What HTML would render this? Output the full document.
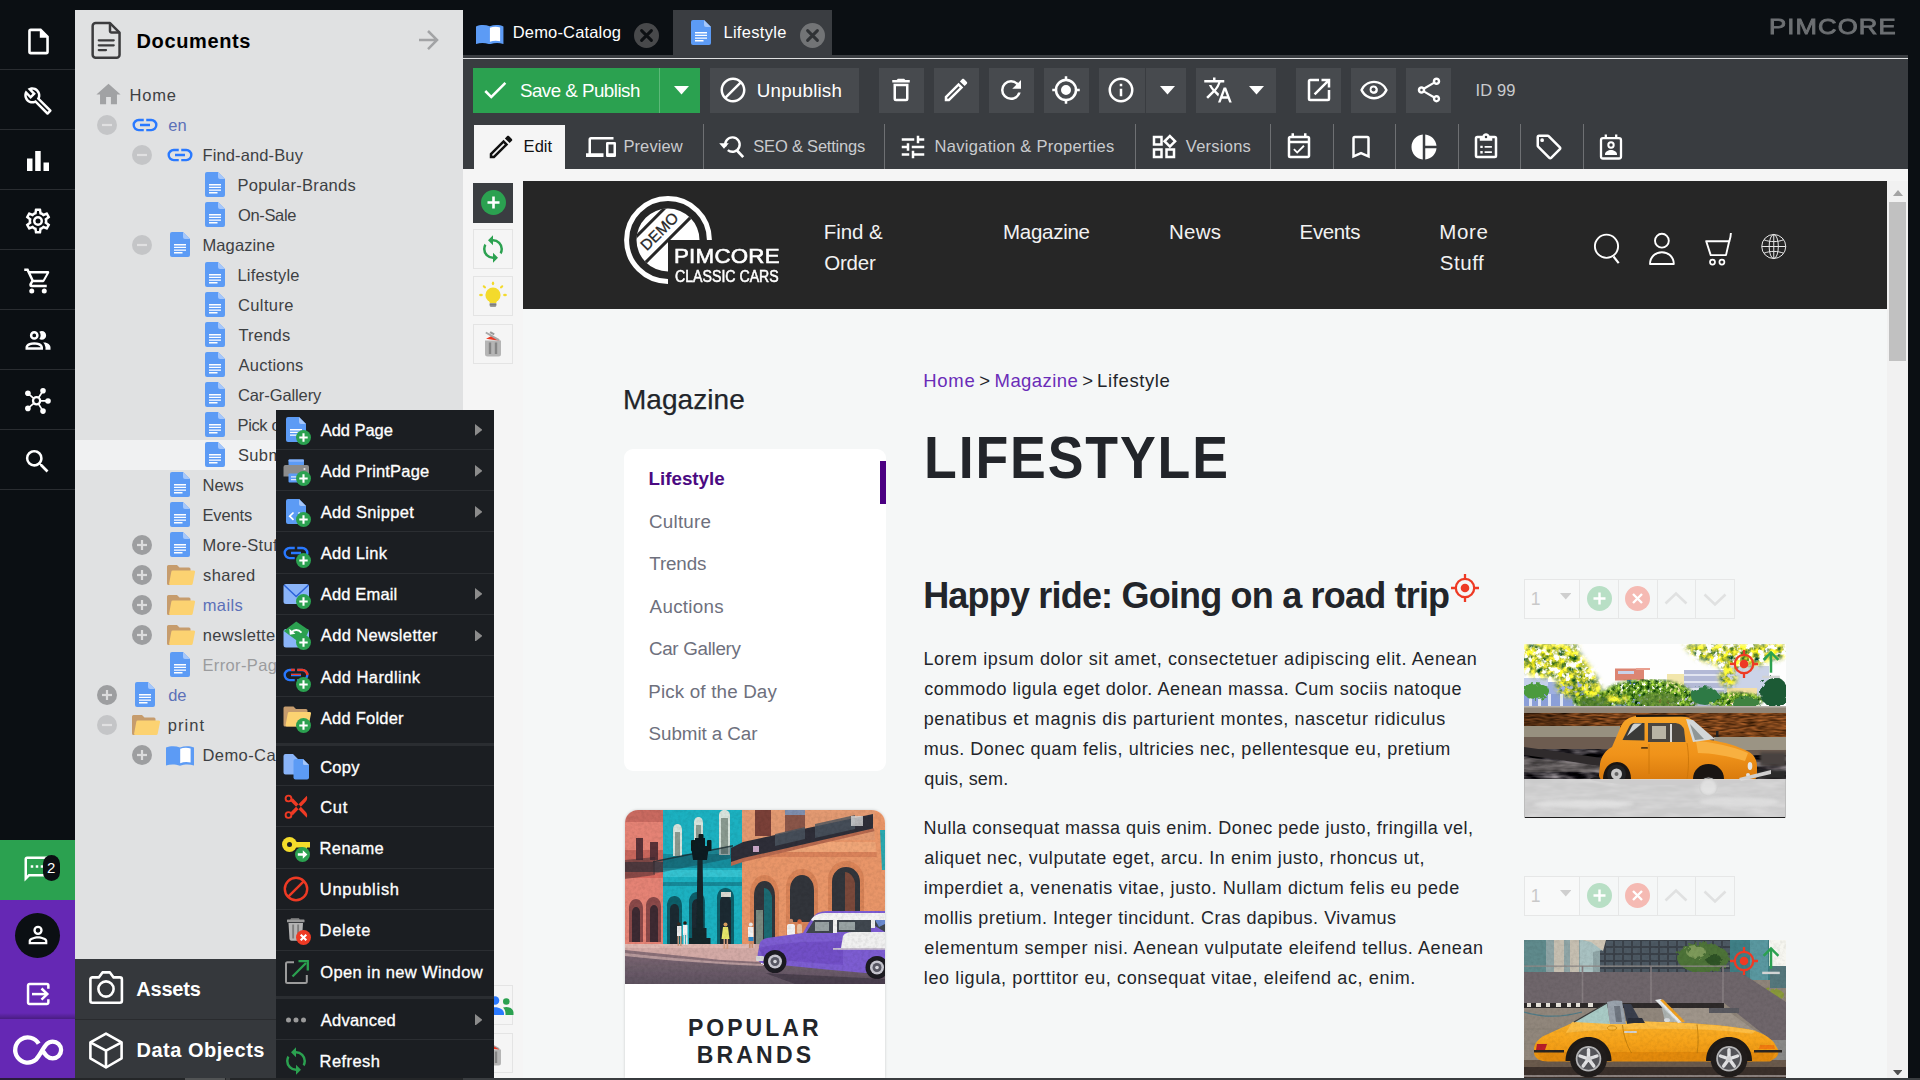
<!DOCTYPE html>
<html lang="en"><head><meta charset="utf-8"><title>Pimcore - Lifestyle</title>
<style>
html,body{margin:0;padding:0}
body{width:1920px;height:1080px;overflow:hidden;background:#0b0f13;position:relative;font-family:"Liberation Sans",sans-serif}
.a{position:absolute;display:block}
.t{white-space:nowrap}
</style></head>
<body>
<!-- chrome -->
<div class="a" style="left:75px;top:10px;width:388px;height:1070px;background:#e0e1e2;"></div>
<div class="a" style="left:0px;top:69px;width:75px;height:1px;background:#2a2d31;"></div>
<div class="a" style="left:0px;top:129px;width:75px;height:1px;background:#2a2d31;"></div>
<div class="a" style="left:0px;top:189px;width:75px;height:1px;background:#2a2d31;"></div>
<div class="a" style="left:0px;top:249px;width:75px;height:1px;background:#2a2d31;"></div>
<div class="a" style="left:0px;top:309px;width:75px;height:1px;background:#2a2d31;"></div>
<div class="a" style="left:0px;top:369px;width:75px;height:1px;background:#2a2d31;"></div>
<div class="a" style="left:0px;top:429px;width:75px;height:1px;background:#2a2d31;"></div>
<div class="a" style="left:0px;top:489px;width:75px;height:1px;background:#2a2d31;"></div>
<svg class="a" style="left:22.5px;top:25.5px" width="31" height="31" viewBox="0 0 24 24"><path fill="#fff" d="M14 2H6a2 2 0 0 0-2 2v16a2 2 0 0 0 2 2h12a2 2 0 0 0 2-2V8zm4 18H6V4h7v5h5z" /></svg>
<svg class="a" style="left:22.5px;top:86.0px" width="30" height="30" viewBox="0 0 24 24"><path fill="#fff" d="m22.61 19-9.08-9.09c.93-2.34.47-5.1-1.44-7C9.79.61 6.21.4 3.66 2.26L7.5 6.11 6.08 7.5 2.25 3.69C.39 6.23.6 9.82 2.9 12.11c1.86 1.86 4.57 2.35 6.89 1.48l9.11 9.11c.39.39 1.02.39 1.41 0l2.3-2.3c.39-.4.39-1.01 0-1.4m-3 1.59-9.46-9.46c-.61.45-1.29.72-2 .82-1.36.2-2.79-.21-3.83-1.25C3.37 9.76 2.93 8.5 3 7.26l3.09 3.09 4.24-4.24L7.24 3c1.26-.05 2.49.39 3.44 1.33a4.47 4.47 0 0 1 1.24 3.96 4.35 4.35 0 0 1-.88 1.96l9.46 9.45z" /></svg>
<svg class="a" style="left:27px;top:151px;" width="22" height="20" viewBox="0 0 22 20"><path d="M0 7.500h5.500V20H0zM8.200 0h5.500v20H8.200zM16.500 11.500H22V20h-5.500z" fill="#fff"/></svg>
<svg class="a" style="left:22.5px;top:206.0px" width="30" height="30" viewBox="0 0 24 24"><path fill="#fff" d="M12 8a4 4 0 0 1 4 4 4 4 0 0 1-4 4 4 4 0 0 1-4-4 4 4 0 0 1 4-4m0 2a2 2 0 0 0-2 2 2 2 0 0 0 2 2 2 2 0 0 0 2-2 2 2 0 0 0-2-2m-2 12c-.25 0-.46-.18-.5-.42l-.37-2.65c-.63-.25-1.17-.59-1.69-.99l-2.49 1.01c-.22.08-.49 0-.61-.22l-2-3.46a.493.493 0 0 1 .12-.64l2.11-1.66L4.5 12l.07-1-2.11-1.63a.493.493 0 0 1-.12-.64l2-3.46c.12-.22.39-.31.61-.22l2.49 1c.52-.39 1.06-.73 1.69-.98l.37-2.65c.04-.24.25-.42.5-.42h4c.25 0 .46.18.5.42l.37 2.65c.63.25 1.17.59 1.69.98l2.49-1c.22-.09.49 0 .61.22l2 3.46c.13.22.07.49-.12.64L19.43 11l.07 1-.07 1 2.11 1.63c.19.15.25.42.12.64l-2 3.46c-.12.22-.39.31-.61.22l-2.49-1c-.52.39-1.06.73-1.69.98l-.37 2.65c-.04.24-.25.42-.5.42zm1.25-18-.37 2.61c-1.2.25-2.26.89-3.03 1.78L5.44 7.35l-.75 1.3L6.8 10.2a5.55 5.55 0 0 0 0 3.6l-2.12 1.56.75 1.3 2.43-1.04c.77.88 1.82 1.52 3.01 1.76l.37 2.62h1.52l.37-2.61c1.19-.25 2.24-.89 3.01-1.77l2.43 1.04.75-1.3-2.12-1.55c.4-1.17.4-2.44 0-3.61l2.11-1.55-.75-1.3-2.41 1.04a5.42 5.42 0 0 0-3.03-1.77L12.75 4z" /></svg>
<svg class="a" style="left:22.5px;top:266.0px" width="30" height="30" viewBox="0 0 24 24"><path fill="#fff" d="M17 18a2 2 0 0 1 2 2 2 2 0 0 1-2 2 2 2 0 0 1-2-2c0-1.11.89-2 2-2M1 2h3.27l.94 2H20a1 1 0 0 1 1 1c0 .17-.05.34-.12.5l-3.58 6.47c-.34.61-1 1.03-1.75 1.03H8.1l-.9 1.63-.03.12a.25.25 0 0 0 .25.25H19v2H7a2 2 0 0 1-2-2c0-.35.09-.68.24-.96l1.36-2.45L3 4H1zm6 16a2 2 0 0 1 2 2 2 2 0 0 1-2 2 2 2 0 0 1-2-2c0-1.11.89-2 2-2m9-7 2.78-5H6.14l2.36 5z" /></svg>
<svg class="a" style="left:22.5px;top:326.0px" width="30" height="30" viewBox="0 0 24 24"><path fill="#fff" d="M13.07 10.41a5 5 0 0 0 0-5.82A3.4 3.4 0 0 1 15 4a3.5 3.5 0 0 1 0 7 3.4 3.4 0 0 1-1.93-.59M5.5 7.5A3.5 3.5 0 1 1 9 11a3.5 3.5 0 0 1-3.5-3.5m2 0A1.5 1.5 0 1 0 9 6a1.5 1.5 0 0 0-1.5 1.5M16 17v2H2v-2s0-4 7-4 7 4 7 4m-2 0c-.14-.78-1.33-2-5-2s-4.93 1.31-5 2m11.95-4A5.32 5.32 0 0 1 18 17v2h4v-2s0-3.63-6.06-4Z" /></svg>
<svg class="a" style="left:22px;top:385px;" width="32" height="32" viewBox="0 0 32 32"><g transform="translate(-22 -385)"><g stroke="#fff" stroke-width="1.700"><path d="M36.600 400.800L27.900 393.300M36.600 400.800L43 390.800M36.600 400.800H48M36.600 400.800L43 411.100M36.600 400.800L27.900 408.400"/></g><circle cx="36.600" cy="400.800" r="3.600" fill="#0b0f13" stroke="#fff" stroke-width="2.300"/><g fill="#fff"><circle cx="27.900" cy="393.300" r="2.800"/><circle cx="43" cy="390.800" r="2.800"/><circle cx="48" cy="401" r="2.800"/><circle cx="43" cy="411.100" r="2.800"/><circle cx="27.900" cy="408.400" r="2.800"/></g></g></svg>
<svg class="a" style="left:22.0px;top:445.5px" width="31" height="31" viewBox="0 0 24 24"><path fill="#fff" d="M9.5 3A6.5 6.5 0 0 1 16 9.5c0 1.61-.59 3.09-1.56 4.23l.27.27h.79l5 5-1.5 1.5-5-5v-.79l-.27-.27A6.52 6.52 0 0 1 9.5 16 6.5 6.5 0 0 1 3 9.5 6.5 6.5 0 0 1 9.5 3m0 2C7 5 5 7 5 9.5S7 14 9.5 14 14 12 14 9.5 12 5 9.5 5" /></svg>
<div class="a" style="left:0px;top:840px;width:75px;height:60px;background:#2ba150;"></div>
<svg class="a" style="left:22.0px;top:853.5px" width="30" height="30" viewBox="0 0 24 24"><path fill="#fff" d="M20 2H4c-1.1 0-2 .9-2 2v18l4-4h14c1.1 0 2-.9 2-2V4c0-1.1-.9-2-2-2m0 14H5.2L4 17.2V4h16zm-3-5h-2V9h2m-4 2h-2V9h2m-4 2H7V9h2" /></svg>
<div class="a" style="left:43px;top:855px;width:17px;height:26px;background:#0b0f13;border-radius:8.500px"></div>
<div class="a t" style="left:47.08px;top:857.00px;font-size:15px;line-height:21px;color:#fff;">2</div>
<div class="a" style="left:0px;top:900px;width:75px;height:180px;background:#6528b4;"></div>
<div class="a" style="left:0px;top:1013px;width:75px;height:6px;background:linear-gradient(to bottom,rgba(0,0,0,0),rgba(0,0,0,.28));"></div>
<div class="a" style="left:15px;top:913px;width:45px;height:45px;background:#0b0f13;border-radius:50%"></div>
<svg class="a" style="left:23.5px;top:921.0px" width="28" height="28" viewBox="0 0 24 24"><path fill="#fff" d="M12 4a4 4 0 0 1 4 4 4 4 0 0 1-4 4 4 4 0 0 1-4-4 4 4 0 0 1 4-4m0 2a2 2 0 0 0-2 2 2 2 0 0 0 2 2 2 2 0 0 0 2-2 2 2 0 0 0-2-2m0 7c2.67 0 8 1.33 8 4v3H4v-3c0-2.67 5.33-4 8-4m0 1.9c-2.97 0-6.1 1.46-6.1 2.1v1.1h12.2V17c0-.64-3.13-2.1-6.1-2.1" /></svg>
<svg class="a" style="left:24px;top:980px;" width="30" height="28" viewBox="0 0 30 28"><g fill="none" stroke="#fff" stroke-width="2.500" stroke-linejoin="round"><path d="M24.350 8.800V5.500a1.500 1.500 0 0 0-1.500-1.500H5.550a1.500 1.500 0 0 0-1.500 1.500V22.600a1.500 1.500 0 0 0 1.500 1.500H22.850a1.500 1.500 0 0 0 1.500-1.500V19.300"/><path d="M8 14.100h15"/><path d="M17.500 8.500l5.800 5.600-5.800 5.600" stroke-linejoin="miter"/></g></svg>
<svg class="a" style="left:8px;top:1030px;" width="60" height="40" viewBox="0 0 60 40"><path transform="translate(-8 -1030)" d="M38.700 1043.700A12.600 12.600 0 1 0 35.900 1059.650C40 1055.500 42.500 1048.500 46.760 1044.060A8.400 8.400 0 1 1 46.760 1055.940C45.200 1054.400 44.200 1053 43.200 1051.500" fill="none" stroke="#fff" stroke-width="4.300" stroke-linecap="butt"/></svg>
<svg class="a" style="left:90px;top:20px;" width="32" height="40" viewBox="0 0 32 40"><g fill="none" stroke="#3c3c3e" stroke-width="2.500" stroke-linejoin="round"><path d="M5.650 3.050H20L29.550 12.600V34.650a3 3 0 0 1-3 3H5.650a3 3 0 0 1-3-3V6.050a3 3 0 0 1 3-3z"/><path d="M20 3.050V11a1.500 1.500 0 0 0 1.500 1.500H29.500"/><path d="M8.800 20.300H23.700M8.800 25.300H23.700M8.800 30.100H16" stroke-linecap="round" stroke-width="2.300"/></g></svg>
<div class="a t" style="left:136.50px;top:27.00px;font-size:20px;line-height:28px;color:#000;font-weight:700;letter-spacing:0.628px;">Documents</div>
<svg class="a" style="left:414.0px;top:25.0px" width="30" height="30" viewBox="0 0 24 24"><path fill="#a2a3a5" d="M4 11v2h12l-5.5 5.5 1.42 1.42L19.84 12l-7.92-7.92L10.5 5.5 16 11z" /></svg>
<div class="a" style="left:75px;top:440px;width:388px;height:30px;background:#f0f1f2;"></div>
<svg class="a" style="left:93.5px;top:80.0px" width="29" height="29" viewBox="0 0 24 24"><path fill="#a1a2a4" d="M10 20v-6h4v6h5v-8h3L12 3 2 12h3v8z" /></svg>
<div class="a t" style="left:129.62px;top:84.00px;font-size:16.5px;line-height:23px;color:#3d4043;letter-spacing:0.755px;">Home</div>
<svg class="a" style="left:96.9px;top:115px;" width="20" height="20" viewBox="0 0 20 20"><circle cx="10" cy="10" r="10" fill="#c4c5c7"/><rect x="5" y="8.900" width="10" height="2.200" fill="#e0e0e1"/></svg>
<svg class="a" style="left:130.0px;top:110.0px" width="30" height="30" viewBox="0 0 24 24"><path fill="#2979ff" d="M3.9 12c0-1.71 1.39-3.1 3.1-3.1h4V7H7a5 5 0 0 0-5 5 5 5 0 0 0 5 5h4v-1.9H7c-1.71 0-3.1-1.39-3.1-3.1M8 13h8v-2H8zm9-6h-4v1.9h4c1.71 0 3.1 1.39 3.1 3.1s-1.39 3.1-3.1 3.1h-4V17h4a5 5 0 0 0 5-5 5 5 0 0 0-5-5" /></svg>
<div class="a t" style="left:168.18px;top:114.00px;font-size:16.5px;line-height:23px;color:#5c70b8;letter-spacing:0.061px;">en</div>
<svg class="a" style="left:131.9px;top:145px;" width="20" height="20" viewBox="0 0 20 20"><circle cx="10" cy="10" r="10" fill="#c4c5c7"/><rect x="5" y="8.900" width="10" height="2.200" fill="#e0e0e1"/></svg>
<svg class="a" style="left:165.0px;top:140.0px" width="30" height="30" viewBox="0 0 24 24"><path fill="#2979ff" d="M3.9 12c0-1.71 1.39-3.1 3.1-3.1h4V7H7a5 5 0 0 0-5 5 5 5 0 0 0 5 5h4v-1.9H7c-1.71 0-3.1-1.39-3.1-3.1M8 13h8v-2H8zm9-6h-4v1.9h4c1.71 0 3.1 1.39 3.1 3.1s-1.39 3.1-3.1 3.1h-4V17h4a5 5 0 0 0 5-5 5 5 0 0 0-5-5" /></svg>
<div class="a t" style="left:202.48px;top:144.00px;font-size:16.5px;line-height:23px;color:#3d4043;letter-spacing:0.125px;">Find-and-Buy</div>
<svg class="a" style="left:205.0px;top:171.9px;" width="20.0" height="25.0" viewBox="0 0 20 25"><path d="M2 0h11l7 7v16a2 2 0 0 1-2 2H2a2 2 0 0 1-2-2V2a2 2 0 0 1 2-2z" fill="#5c9bf5"/><path d="M13 0l7 7h-5a2 2 0 0 1-2-2z" fill="#a5c7fb"/><path d="M4 12h12v1.4H4zM4 14.7h12v1.4H4zM4 17.4h12v1.4H4zM4 20.1h8.5v1.4H4z" fill="#fff"/></svg>
<div class="a t" style="left:237.48px;top:174.00px;font-size:16.5px;line-height:23px;color:#3d4043;letter-spacing:0.280px;">Popular-Brands</div>
<svg class="a" style="left:205.0px;top:201.9px;" width="20.0" height="25.0" viewBox="0 0 20 25"><path d="M2 0h11l7 7v16a2 2 0 0 1-2 2H2a2 2 0 0 1-2-2V2a2 2 0 0 1 2-2z" fill="#5c9bf5"/><path d="M13 0l7 7h-5a2 2 0 0 1-2-2z" fill="#a5c7fb"/><path d="M4 12h12v1.4H4zM4 14.7h12v1.4H4zM4 17.4h12v1.4H4zM4 20.1h8.5v1.4H4z" fill="#fff"/></svg>
<div class="a t" style="left:237.95px;top:204.00px;font-size:16.5px;line-height:23px;color:#3d4043;letter-spacing:-0.334px;">On-Sale</div>
<svg class="a" style="left:131.9px;top:235px;" width="20" height="20" viewBox="0 0 20 20"><circle cx="10" cy="10" r="10" fill="#c4c5c7"/><rect x="5" y="8.900" width="10" height="2.200" fill="#e0e0e1"/></svg>
<svg class="a" style="left:170.0px;top:231.9px;" width="20.0" height="25.0" viewBox="0 0 20 25"><path d="M2 0h11l7 7v16a2 2 0 0 1-2 2H2a2 2 0 0 1-2-2V2a2 2 0 0 1 2-2z" fill="#5c9bf5"/><path d="M13 0l7 7h-5a2 2 0 0 1-2-2z" fill="#a5c7fb"/><path d="M4 12h12v1.4H4zM4 14.7h12v1.4H4zM4 17.4h12v1.4H4zM4 20.1h8.5v1.4H4z" fill="#fff"/></svg>
<div class="a t" style="left:202.48px;top:234.00px;font-size:16.5px;line-height:23px;color:#3d4043;letter-spacing:0.114px;">Magazine</div>
<svg class="a" style="left:205.0px;top:261.9px;" width="20.0" height="25.0" viewBox="0 0 20 25"><path d="M2 0h11l7 7v16a2 2 0 0 1-2 2H2a2 2 0 0 1-2-2V2a2 2 0 0 1 2-2z" fill="#5c9bf5"/><path d="M13 0l7 7h-5a2 2 0 0 1-2-2z" fill="#a5c7fb"/><path d="M4 12h12v1.4H4zM4 14.7h12v1.4H4zM4 17.4h12v1.4H4zM4 20.1h8.5v1.4H4z" fill="#fff"/></svg>
<div class="a t" style="left:237.48px;top:264.00px;font-size:16.5px;line-height:23px;color:#3d4043;letter-spacing:0.183px;">Lifestyle</div>
<svg class="a" style="left:205.0px;top:291.9px;" width="20.0" height="25.0" viewBox="0 0 20 25"><path d="M2 0h11l7 7v16a2 2 0 0 1-2 2H2a2 2 0 0 1-2-2V2a2 2 0 0 1 2-2z" fill="#5c9bf5"/><path d="M13 0l7 7h-5a2 2 0 0 1-2-2z" fill="#a5c7fb"/><path d="M4 12h12v1.4H4zM4 14.7h12v1.4H4zM4 17.4h12v1.4H4zM4 20.1h8.5v1.4H4z" fill="#fff"/></svg>
<div class="a t" style="left:237.97px;top:294.00px;font-size:16.5px;line-height:23px;color:#3d4043;letter-spacing:0.386px;">Culture</div>
<svg class="a" style="left:205.0px;top:321.9px;" width="20.0" height="25.0" viewBox="0 0 20 25"><path d="M2 0h11l7 7v16a2 2 0 0 1-2 2H2a2 2 0 0 1-2-2V2a2 2 0 0 1 2-2z" fill="#5c9bf5"/><path d="M13 0l7 7h-5a2 2 0 0 1-2-2z" fill="#a5c7fb"/><path d="M4 12h12v1.4H4zM4 14.7h12v1.4H4zM4 17.4h12v1.4H4zM4 20.1h8.5v1.4H4z" fill="#fff"/></svg>
<div class="a t" style="left:238.41px;top:324.00px;font-size:16.5px;line-height:23px;color:#3d4043;letter-spacing:0.225px;">Trends</div>
<svg class="a" style="left:205.0px;top:351.9px;" width="20.0" height="25.0" viewBox="0 0 20 25"><path d="M2 0h11l7 7v16a2 2 0 0 1-2 2H2a2 2 0 0 1-2-2V2a2 2 0 0 1 2-2z" fill="#5c9bf5"/><path d="M13 0l7 7h-5a2 2 0 0 1-2-2z" fill="#a5c7fb"/><path d="M4 12h12v1.4H4zM4 14.7h12v1.4H4zM4 17.4h12v1.4H4zM4 20.1h8.5v1.4H4z" fill="#fff"/></svg>
<div class="a t" style="left:238.62px;top:354.00px;font-size:16.5px;line-height:23px;color:#3d4043;letter-spacing:0.196px;">Auctions</div>
<svg class="a" style="left:205.0px;top:381.9px;" width="20.0" height="25.0" viewBox="0 0 20 25"><path d="M2 0h11l7 7v16a2 2 0 0 1-2 2H2a2 2 0 0 1-2-2V2a2 2 0 0 1 2-2z" fill="#5c9bf5"/><path d="M13 0l7 7h-5a2 2 0 0 1-2-2z" fill="#a5c7fb"/><path d="M4 12h12v1.4H4zM4 14.7h12v1.4H4zM4 17.4h12v1.4H4zM4 20.1h8.5v1.4H4z" fill="#fff"/></svg>
<div class="a t" style="left:237.97px;top:384.00px;font-size:16.5px;line-height:23px;color:#3d4043;letter-spacing:-0.096px;">Car-Gallery</div>
<svg class="a" style="left:205.0px;top:411.9px;" width="20.0" height="25.0" viewBox="0 0 20 25"><path d="M2 0h11l7 7v16a2 2 0 0 1-2 2H2a2 2 0 0 1-2-2V2a2 2 0 0 1 2-2z" fill="#5c9bf5"/><path d="M13 0l7 7h-5a2 2 0 0 1-2-2z" fill="#a5c7fb"/><path d="M4 12h12v1.4H4zM4 14.7h12v1.4H4zM4 17.4h12v1.4H4zM4 20.1h8.5v1.4H4z" fill="#fff"/></svg>
<div class="a t" style="left:237.48px;top:414.00px;font-size:16.5px;line-height:23px;color:#3d4043;letter-spacing:-0.343px;">Pick of the Day</div>
<svg class="a" style="left:205.0px;top:441.9px;" width="20.0" height="25.0" viewBox="0 0 20 25"><path d="M2 0h11l7 7v16a2 2 0 0 1-2 2H2a2 2 0 0 1-2-2V2a2 2 0 0 1 2-2z" fill="#5c9bf5"/><path d="M13 0l7 7h-5a2 2 0 0 1-2-2z" fill="#a5c7fb"/><path d="M4 12h12v1.4H4zM4 14.7h12v1.4H4zM4 17.4h12v1.4H4zM4 20.1h8.5v1.4H4z" fill="#fff"/></svg>
<div class="a t" style="left:237.92px;top:444.00px;font-size:16.5px;line-height:23px;color:#3d4043;letter-spacing:0.386px;">Submit a Car</div>
<svg class="a" style="left:170.0px;top:471.9px;" width="20.0" height="25.0" viewBox="0 0 20 25"><path d="M2 0h11l7 7v16a2 2 0 0 1-2 2H2a2 2 0 0 1-2-2V2a2 2 0 0 1 2-2z" fill="#5c9bf5"/><path d="M13 0l7 7h-5a2 2 0 0 1-2-2z" fill="#a5c7fb"/><path d="M4 12h12v1.4H4zM4 14.7h12v1.4H4zM4 17.4h12v1.4H4zM4 20.1h8.5v1.4H4z" fill="#fff"/></svg>
<div class="a t" style="left:202.48px;top:474.00px;font-size:16.5px;line-height:23px;color:#3d4043;letter-spacing:0.007px;">News</div>
<svg class="a" style="left:170.0px;top:501.9px;" width="20.0" height="25.0" viewBox="0 0 20 25"><path d="M2 0h11l7 7v16a2 2 0 0 1-2 2H2a2 2 0 0 1-2-2V2a2 2 0 0 1 2-2z" fill="#5c9bf5"/><path d="M13 0l7 7h-5a2 2 0 0 1-2-2z" fill="#a5c7fb"/><path d="M4 12h12v1.4H4zM4 14.7h12v1.4H4zM4 17.4h12v1.4H4zM4 20.1h8.5v1.4H4z" fill="#fff"/></svg>
<div class="a t" style="left:202.48px;top:504.00px;font-size:16.5px;line-height:23px;color:#3d4043;letter-spacing:-0.130px;">Events</div>
<svg class="a" style="left:131.9px;top:535px;" width="20" height="20" viewBox="0 0 20 20"><circle cx="10" cy="10" r="10" fill="#9d9ea0"/><rect x="5" y="8.900" width="10" height="2.200" fill="#dcdcdd"/><rect x="8.900" y="5" width="2.200" height="10" fill="#dcdcdd"/></svg>
<svg class="a" style="left:170.0px;top:531.9px;" width="20.0" height="25.0" viewBox="0 0 20 25"><path d="M2 0h11l7 7v16a2 2 0 0 1-2 2H2a2 2 0 0 1-2-2V2a2 2 0 0 1 2-2z" fill="#5c9bf5"/><path d="M13 0l7 7h-5a2 2 0 0 1-2-2z" fill="#a5c7fb"/><path d="M4 12h12v1.4H4zM4 14.7h12v1.4H4zM4 17.4h12v1.4H4zM4 20.1h8.5v1.4H4z" fill="#fff"/></svg>
<div class="a t" style="left:202.48px;top:534.00px;font-size:16.5px;line-height:23px;color:#3d4043;letter-spacing:0.341px;">More-Stuff</div>
<svg class="a" style="left:131.9px;top:565px;" width="20" height="20" viewBox="0 0 20 20"><circle cx="10" cy="10" r="10" fill="#9d9ea0"/><rect x="5" y="8.900" width="10" height="2.200" fill="#dcdcdd"/><rect x="8.900" y="5" width="2.200" height="10" fill="#dcdcdd"/></svg>
<svg class="a" style="left:167.0px;top:565.0px;" width="28.0" height="20.0" viewBox="0 0 28 20"><path d="M1.5 0h8.5l2.5 2.6h9.5a1.5 1.5 0 0 1 1.5 1.5V18.5a1.5 1.5 0 0 1-1.500 1.5H1.500A1.500 1.500 0 0 1 0 18.500V1.500A1.500 1.500 0 0 1 1.500 0z" fill="#c69c6d"/><path d="M5.800 5.500h20.700a1.500 1.500 0 0 1 1.480 1.800l-2.300 11.400a1.600 1.600 0 0 1-1.560 1.300H3.400a1.300 1.300 0 0 1-1.280-1.560l2.200-11.700a1.500 1.500 0 0 1 1.480-1.240z" fill="#fcd271"/></svg>
<div class="a t" style="left:203.11px;top:564.00px;font-size:16.5px;line-height:23px;color:#3d4043;letter-spacing:0.305px;">shared</div>
<svg class="a" style="left:131.9px;top:595px;" width="20" height="20" viewBox="0 0 20 20"><circle cx="10" cy="10" r="10" fill="#9d9ea0"/><rect x="5" y="8.900" width="10" height="2.200" fill="#dcdcdd"/><rect x="8.900" y="5" width="2.200" height="10" fill="#dcdcdd"/></svg>
<svg class="a" style="left:167.0px;top:595.0px;" width="28.0" height="20.0" viewBox="0 0 28 20"><path d="M1.5 0h8.5l2.5 2.6h9.5a1.5 1.5 0 0 1 1.5 1.5V18.5a1.5 1.5 0 0 1-1.500 1.5H1.500A1.500 1.500 0 0 1 0 18.500V1.500A1.500 1.500 0 0 1 1.500 0z" fill="#c69c6d"/><path d="M5.800 5.500h20.700a1.500 1.500 0 0 1 1.480 1.800l-2.300 11.400a1.600 1.600 0 0 1-1.560 1.300H3.400a1.300 1.300 0 0 1-1.280-1.560l2.200-11.700a1.500 1.500 0 0 1 1.480-1.240z" fill="#fcd271"/></svg>
<div class="a t" style="left:202.72px;top:594.00px;font-size:16.5px;line-height:23px;color:#5c70b8;letter-spacing:0.384px;">mails</div>
<svg class="a" style="left:131.9px;top:625px;" width="20" height="20" viewBox="0 0 20 20"><circle cx="10" cy="10" r="10" fill="#9d9ea0"/><rect x="5" y="8.900" width="10" height="2.200" fill="#dcdcdd"/><rect x="8.900" y="5" width="2.200" height="10" fill="#dcdcdd"/></svg>
<svg class="a" style="left:167.0px;top:625.0px;" width="28.0" height="20.0" viewBox="0 0 28 20"><path d="M1.5 0h8.5l2.5 2.6h9.5a1.5 1.5 0 0 1 1.5 1.5V18.5a1.5 1.5 0 0 1-1.500 1.5H1.500A1.500 1.500 0 0 1 0 18.500V1.500A1.500 1.500 0 0 1 1.500 0z" fill="#c69c6d"/><path d="M5.800 5.500h20.700a1.500 1.500 0 0 1 1.480 1.800l-2.300 11.400a1.600 1.600 0 0 1-1.560 1.300H3.400a1.300 1.300 0 0 1-1.280-1.560l2.200-11.700a1.500 1.500 0 0 1 1.480-1.240z" fill="#fcd271"/></svg>
<div class="a t" style="left:202.72px;top:624.00px;font-size:16.5px;line-height:23px;color:#3d4043;letter-spacing:0.351px;">newsletters</div>
<svg class="a" style="left:170.0px;top:651.9px;" width="20.0" height="25.0" viewBox="0 0 20 25"><path d="M2 0h11l7 7v16a2 2 0 0 1-2 2H2a2 2 0 0 1-2-2V2a2 2 0 0 1 2-2z" fill="#5c9bf5"/><path d="M13 0l7 7h-5a2 2 0 0 1-2-2z" fill="#a5c7fb"/><path d="M4 12h12v1.4H4zM4 14.7h12v1.4H4zM4 17.4h12v1.4H4zM4 20.1h8.5v1.4H4z" fill="#fff"/></svg>
<div class="a t" style="left:202.48px;top:654.00px;font-size:16.5px;line-height:23px;color:#9b9c9e;letter-spacing:0.360px;">Error-Page</div>
<svg class="a" style="left:96.9px;top:685px;" width="20" height="20" viewBox="0 0 20 20"><circle cx="10" cy="10" r="10" fill="#9d9ea0"/><rect x="5" y="8.900" width="10" height="2.200" fill="#dcdcdd"/><rect x="8.900" y="5" width="2.200" height="10" fill="#dcdcdd"/></svg>
<svg class="a" style="left:135.0px;top:681.9px;" width="20.0" height="25.0" viewBox="0 0 20 25"><path d="M2 0h11l7 7v16a2 2 0 0 1-2 2H2a2 2 0 0 1-2-2V2a2 2 0 0 1 2-2z" fill="#5c9bf5"/><path d="M13 0l7 7h-5a2 2 0 0 1-2-2z" fill="#a5c7fb"/><path d="M4 12h12v1.4H4zM4 14.7h12v1.4H4zM4 17.4h12v1.4H4zM4 20.1h8.5v1.4H4z" fill="#fff"/></svg>
<div class="a t" style="left:168.19px;top:684.00px;font-size:16.5px;line-height:23px;color:#5c70b8;letter-spacing:-0.044px;">de</div>
<svg class="a" style="left:96.9px;top:715px;" width="20" height="20" viewBox="0 0 20 20"><circle cx="10" cy="10" r="10" fill="#c4c5c7"/><rect x="5" y="8.900" width="10" height="2.200" fill="#e0e0e1"/></svg>
<svg class="a" style="left:132.0px;top:715.0px;" width="28.0" height="20.0" viewBox="0 0 28 20"><path d="M1.5 0h8.5l2.5 2.6h9.5a1.5 1.5 0 0 1 1.5 1.5V18.5a1.5 1.5 0 0 1-1.500 1.5H1.500A1.500 1.500 0 0 1 0 18.500V1.500A1.500 1.500 0 0 1 1.500 0z" fill="#c69c6d"/><path d="M5.800 5.500h20.700a1.500 1.500 0 0 1 1.480 1.800l-2.300 11.400a1.600 1.600 0 0 1-1.560 1.300H3.400a1.300 1.300 0 0 1-1.280-1.560l2.200-11.700a1.500 1.500 0 0 1 1.480-1.240z" fill="#fcd271"/></svg>
<div class="a t" style="left:167.81px;top:714.00px;font-size:16.5px;line-height:23px;color:#3d4043;letter-spacing:1.017px;">print</div>
<svg class="a" style="left:131.9px;top:745px;" width="20" height="20" viewBox="0 0 20 20"><circle cx="10" cy="10" r="10" fill="#9d9ea0"/><rect x="5" y="8.900" width="10" height="2.200" fill="#dcdcdd"/><rect x="8.900" y="5" width="2.200" height="10" fill="#dcdcdd"/></svg>
<svg class="a" style="left:166.0px;top:744.5px;" width="28.0" height="21.0" viewBox="0 0 28 21"><path d="M0 2.500C4 .800 9.500 .600 14 2.400 18.500 .600 24 .800 28 2.500V20.500C24 19 18.500 19 14 20.800 9.500 19 4 19 0 20.500z" fill="#5c9bf5"/><path d="M14.200 3.800C17.300 2.600 21.400 2.500 24.600 3.500V17.600C21.400 16.800 17.300 16.900 14.200 18.200z" fill="#fff"/></svg>
<div class="a t" style="left:202.48px;top:744.00px;font-size:16.5px;line-height:23px;color:#3d4043;letter-spacing:0.414px;">Demo-Catalog</div>
<div class="a" style="left:75px;top:959px;width:388px;height:60px;background:#35383c;"></div>
<div class="a" style="left:75px;top:1019px;width:388px;height:1px;background:#292b2e;"></div>
<div class="a" style="left:75px;top:1020px;width:388px;height:58px;background:#35383c;"></div>
<svg class="a" style="left:86px;top:968px;" width="40" height="40" viewBox="0 0 40 40"><g fill="none" stroke="#fff" stroke-width="2.600" stroke-linejoin="round"><path d="M6.400 9.400h6.400l3.700-5h7.400l3.700 5h6.300a2 2 0 0 1 2 2v21.400a2 2 0 0 1-2 2H6.400a2 2 0 0 1-2-2V11.400a2 2 0 0 1 2-2z"/><circle cx="20" cy="21" r="7.600"/></g></svg>
<div class="a t" style="left:136.23px;top:975.00px;font-size:20px;line-height:28px;color:#fff;font-weight:700;letter-spacing:-0.184px;">Assets</div>
<svg class="a" style="left:86px;top:1030px;" width="40" height="42" viewBox="0 0 40 42"><g fill="none" stroke="#fff" stroke-width="2.600" stroke-linejoin="round"><path d="M20 3.600L35.600 12.400V28.300L20 37.500 4.400 28.300V12.400z"/><path d="M4.400 12.400L20 20.600 35.600 12.400M20 20.600V37.500"/></g></svg>
<div class="a t" style="left:136.50px;top:1036.00px;font-size:20px;line-height:28px;color:#fff;font-weight:700;letter-spacing:0.515px;">Data Objects</div>
<!-- tabs -->
<div class="a" style="left:673px;top:10px;width:159px;height:45px;background:#3a3d41;"></div>
<div class="a" style="left:463px;top:55px;width:1445px;height:3px;background:#3a3d41;"></div>
<div class="a" style="left:463px;top:58px;width:1445px;height:1px;background:#dfe0e1;"></div>
<div class="a" style="left:463px;top:59px;width:1445px;height:110px;background:#393c40;"></div>
<svg class="a" style="left:476.28px;top:23.51px;" width="27.439999999999998" height="20.58" viewBox="0 0 28 21"><path d="M0 2.500C4 .800 9.500 .600 14 2.400 18.500 .600 24 .800 28 2.500V20.500C24 19 18.500 19 14 20.800 9.500 19 4 19 0 20.500z" fill="#5c9bf5"/><path d="M14.200 3.800C17.300 2.600 21.400 2.500 24.600 3.500V17.600C21.400 16.800 17.300 16.900 14.200 18.200z" fill="#fff"/></svg>
<div class="a t" style="left:512.72px;top:21.00px;font-size:16.5px;line-height:23px;color:#fff;letter-spacing:0.170px;">Demo-Catalog</div>
<svg class="a" style="left:634px;top:22.5px;" width="25" height="25" viewBox="0 0 25 25"><circle cx="12.500" cy="12.500" r="12.500" fill="#48494b"/><path d="M7.600 7.600l9.800 9.800M17.400 7.600l-9.800 9.800" stroke="#0d1013" stroke-width="3" stroke-linecap="round"/></svg>
<svg class="a" style="left:690.5px;top:20.0px;" width="20.0" height="25.0" viewBox="0 0 20 25"><path d="M2 0h11l7 7v16a2 2 0 0 1-2 2H2a2 2 0 0 1-2-2V2a2 2 0 0 1 2-2z" fill="#5c9bf5"/><path d="M13 0l7 7h-5a2 2 0 0 1-2-2z" fill="#a5c7fb"/><path d="M4 12h12v1.4H4zM4 14.7h12v1.4H4zM4 17.4h12v1.4H4zM4 20.1h8.5v1.4H4z" fill="#fff"/></svg>
<div class="a t" style="left:723.40px;top:21.00px;font-size:16.5px;line-height:23px;color:#fff;letter-spacing:0.318px;">Lifestyle</div>
<svg class="a" style="left:800px;top:22.5px;" width="25" height="25" viewBox="0 0 25 25"><circle cx="12.500" cy="12.500" r="12.500" fill="#727476"/><path d="M7.600 7.600l9.800 9.800M17.400 7.600l-9.800 9.800" stroke="#2f3235" stroke-width="3" stroke-linecap="round"/></svg>
<div class="a t" style="left:1768.55px;top:11.00px;font-size:21.8px;line-height:31px;color:#6d7073;letter-spacing:0.922px;transform:scaleX(1.1800);transform-origin:0 0;-webkit-text-stroke:0.850px #6d7073;">PIMCORE</div>
<!-- toolbar -->
<div class="a" style="left:473px;top:68px;width:187px;height:45px;background:#2ba150;"></div>
<div class="a" style="left:660px;top:68px;width:40px;height:45px;background:#2ba150;"></div>
<div class="a" style="left:659px;top:68px;width:1px;height:45px;background:#5cb878;"></div>
<svg class="a" style="left:480.0px;top:75.0px" width="30" height="30" viewBox="0 0 24 24"><path fill="#fff" d="M21 7 9 19l-5.5-5.5 1.41-1.41L9 16.17 19.59 5.59z" /></svg>
<div class="a t" style="left:519.90px;top:78.00px;font-size:18.75px;line-height:26px;color:#fff;letter-spacing:-0.514px;">Save &amp; Publish</div>
<svg class="a" style="left:673.5px;top:86.25px;" width="15" height="8.5" viewBox="0 0 15 8.5"><path d="M0 0h15l-7.5 8.5z" fill="#fff"/></svg>
<div class="a" style="left:710px;top:68px;width:149px;height:45px;background:#474a4e;"></div>
<svg class="a" style="left:718.0px;top:74.9px" width="30" height="30" viewBox="0 0 24 24"><path fill="#fff" d="M12 2c5.5 0 10 4.5 10 10s-4.5 10-10 10S2 17.5 2 12 6.5 2 12 2m0 2c-1.9 0-3.6.6-4.9 1.7l11.2 11.2c1-1.4 1.7-3.1 1.7-4.9 0-4.4-3.6-8-8-8m4.9 14.3L5.7 7.1C4.6 8.4 4 10.1 4 12c0 4.4 3.6 8 8 8 1.9 0 3.6-.6 4.9-1.7" transform="matrix(-1 0 0 1 24 0)" /></svg>
<div class="a t" style="left:756.87px;top:78.00px;font-size:18.75px;line-height:26px;color:#fff;letter-spacing:0.204px;">Unpublish</div>
<div class="a" style="left:879px;top:68px;width:45px;height:45px;background:#474a4e;"></div>
<svg class="a" style="left:885.8px;top:74.9px" width="30" height="30" viewBox="0 0 24 24"><path fill="#fff" d="M6 19a2 2 0 0 0 2 2h8a2 2 0 0 0 2-2V7H6zM8 9h8v10H8zm7.5-5-1-1h-5l-1 1H5v2h14V4z" /></svg>
<div class="a" style="left:934px;top:68px;width:45px;height:45px;background:#474a4e;"></div>
<svg class="a" style="left:940.8px;top:74.9px" width="30" height="30" viewBox="0 0 24 24"><path fill="#fff" d="m14.06 9 .94.94L5.92 19H5v-.92zm3.6-6c-.25 0-.51.1-.7.29l-1.83 1.83 3.75 3.75 1.83-1.83c.39-.39.39-1.04 0-1.41l-2.34-2.34c-.2-.2-.45-.29-.71-.29m-3.6 3.19L3 17.25V21h3.75L17.81 9.94z" /></svg>
<div class="a" style="left:989px;top:68px;width:45px;height:45px;background:#474a4e;"></div>
<svg class="a" style="left:995.8px;top:74.9px" width="30" height="30" viewBox="0 0 24 24"><path fill="#fff" d="M17.65 6.35A7.96 7.96 0 0 0 12 4a8 8 0 0 0-8 8 8 8 0 0 0 8 8c3.73 0 6.84-2.55 7.73-6h-2.08A5.99 5.99 0 0 1 12 18a6 6 0 0 1-6-6 6 6 0 0 1 6-6c1.66 0 3.14.69 4.22 1.78L13 11h7V4z" /></svg>
<div class="a" style="left:1044px;top:68px;width:45px;height:45px;background:#474a4e;"></div>
<svg class="a" style="left:1050.8px;top:74.9px" width="30" height="30" viewBox="0 0 24 24"><path fill="#fff" d="M12 8a4 4 0 0 1 4 4 4 4 0 0 1-4 4 4 4 0 0 1-4-4 4 4 0 0 1 4-4m-8.95 5H1v-2h2.05C3.5 6.83 6.83 3.5 11 3.05V1h2v2.05c4.17.45 7.5 3.78 7.95 7.95H23v2h-2.05c-.45 4.17-3.78 7.5-7.95 7.95V23h-2v-2.05C6.83 20.5 3.5 17.17 3.05 13M12 5a7 7 0 0 0-7 7 7 7 0 0 0 7 7 7 7 0 0 0 7-7 7 7 0 0 0-7-7" /></svg>
<div class="a" style="left:1099px;top:68px;width:46px;height:45px;background:#474a4e;"></div>
<svg class="a" style="left:1105.7px;top:74.9px" width="30" height="30" viewBox="0 0 24 24"><path fill="#fff" d="M11 9h2V7h-2m1 13c-4.41 0-8-3.59-8-8s3.59-8 8-8 8 3.59 8 8-3.59 8-8 8m0-18A10 10 0 0 0 2 12a10 10 0 0 0 10 10 10 10 0 0 0 10-10A10 10 0 0 0 12 2m-1 15h2v-6h-2z" /></svg>
<div class="a" style="left:1146px;top:68px;width:40px;height:45px;background:#474a4e;"></div>
<svg class="a" style="left:1160.0px;top:86.25px;" width="15" height="8.5" viewBox="0 0 15 8.5"><path d="M0 0h15l-7.5 8.5z" fill="#fff"/></svg>
<div class="a" style="left:1196px;top:68px;width:80px;height:45px;background:#474a4e;"></div>
<svg class="a" style="left:1203.0px;top:75.0px" width="30" height="30" viewBox="0 0 24 24"><path fill="#fff" d="m12.87 15.07-2.54-2.51.03-.03A17.5 17.5 0 0 0 14.07 6H17V4h-7V2H8v2H1v2h11.17C11.5 7.92 10.44 9.75 9 11.35 8.07 10.32 7.3 9.19 6.69 8h-2c.73 1.63 1.73 3.17 2.98 4.56l-5.09 5.02L4 19l5-5 3.11 3.11zM18.5 10h-2L12 22h2l1.12-3h4.75L21 22h2zm-2.62 7 1.62-4.33L19.12 17z" /></svg>
<svg class="a" style="left:1249.0px;top:86.25px;" width="15" height="8.5" viewBox="0 0 15 8.5"><path d="M0 0h15l-7.5 8.5z" fill="#fff"/></svg>
<div class="a" style="left:1296px;top:68px;width:45px;height:45px;background:#474a4e;"></div>
<svg class="a" style="left:1303.8px;top:74.9px" width="30" height="30" viewBox="0 0 24 24"><path fill="#fff" d="M14 3v2h3.59l-9.83 9.83 1.41 1.41L19 6.41V10h2V3m-2 16H5V5h7V3H5a2 2 0 0 0-2 2v14a2 2 0 0 0 2 2h14a2 2 0 0 0 2-2v-7h-2z" /></svg>
<div class="a" style="left:1351px;top:68px;width:45px;height:45px;background:#474a4e;"></div>
<svg class="a" style="left:1358.8px;top:74.9px" width="30" height="30" viewBox="0 0 24 24"><path fill="#fff" d="M12 9a3 3 0 0 1 3 3 3 3 0 0 1-3 3 3 3 0 0 1-3-3 3 3 0 0 1 3-3m0-4.5c5 0 9.27 3.11 11 7.5-1.73 4.39-6 7.5-11 7.5S2.73 16.39 1 12c1.73-4.39 6-7.5 11-7.5M3.18 12a9.821 9.821 0 0 0 17.64 0 9.821 9.821 0 0 0-17.64 0" /></svg>
<div class="a" style="left:1406px;top:68px;width:45px;height:45px;background:#474a4e;"></div>
<svg class="a" style="left:1413.8px;top:74.9px" width="30" height="30" viewBox="0 0 24 24"><path fill="#fff" d="M18 16.08c-.76 0-1.44.3-1.96.77L8.91 12.7c.05-.23.09-.46.09-.7s-.04-.47-.09-.7l7.05-4.11c.54.5 1.25.81 2.04.81 1.66 0 3-1.34 3-3s-1.34-3-3-3-3 1.34-3 3c0 .24.04.47.09.7L8.04 9.81C7.5 9.31 6.79 9 6 9c-1.66 0-3 1.34-3 3s1.34 3 3 3c.79 0 1.5-.31 2.04-.81l7.12 4.15c-.05.21-.08.43-.08.66 0 1.61 1.31 2.91 2.92 2.91s2.92-1.3 2.92-2.91-1.31-2.92-2.92-2.92M18 4c.55 0 1 .45 1 1s-.45 1-1 1-1-.45-1-1 .45-1 1-1M6 13c-.55 0-1-.45-1-1s.45-1 1-1 1 .45 1 1-.45 1-1 1m12 7c-.55 0-1-.45-1-1s.45-1 1-1 1 .45 1 1-.45 1-1 1" /></svg>
<svg class="a" style="left:1366.3px;top:82.4px;" width="15" height="15" viewBox="0 0 15 15"><circle cx="7.500" cy="7.500" r="3.900" fill="#fff"/><circle cx="7.500" cy="7.500" r="2" fill="#474a4e"/></svg>
<div class="a t" style="left:1475.56px;top:79.00px;font-size:16.5px;line-height:23px;color:#c9cbce;letter-spacing:0.106px;">ID 99</div>
<!-- subtabs -->
<div class="a" style="left:474px;top:125px;width:91px;height:44px;background:#f5f5f5;"></div>
<svg class="a" style="left:486.0px;top:132.0px" width="30" height="30" viewBox="0 0 24 24"><path fill="#111" d="m14.06 9 .94.94L5.92 19H5v-.92zm3.6-6c-.25 0-.51.1-.7.29l-1.83 1.83 3.75 3.75 1.83-1.83c.39-.39.39-1.04 0-1.41l-2.34-2.34c-.2-.2-.45-.29-.71-.29m-3.6 3.19L3 17.25V21h3.75L17.81 9.94z" /></svg>
<div class="a t" style="left:523.60px;top:135.00px;font-size:16.5px;line-height:23px;color:#111;letter-spacing:0.037px;">Edit</div>
<svg class="a" style="left:586.0px;top:132.0px" width="30" height="30" viewBox="0 0 24 24"><path fill="#fff" d="M22 17h-4v-7h4m1-2h-6a1 1 0 0 0-1 1v10a1 1 0 0 0 1 1h6a1 1 0 0 0 1-1V9a1 1 0 0 0-1-1M4 6h18V4H4a2 2 0 0 0-2 2v11H0v3h14v-3H4z" /></svg>
<div class="a t" style="left:623.40px;top:135.00px;font-size:16.5px;line-height:23px;color:#c9cbce;letter-spacing:0.109px;">Preview</div>
<svg class="a" style="left:716px;top:131.5px;" width="30" height="30" viewBox="0 0 30 30"><g fill="none" stroke="#fff" stroke-width="2.400"><path d="M9.500 14.500a7.200 7.200 0 1 1 2.300 3.600"/><path d="M21 18.500l6.200 6.600" stroke-width="2.700"/></g><path d="M3.200 11.200h9.600l-4.800 5.600z" fill="#fff"/></svg>
<div class="a t" style="left:753.29px;top:135.00px;font-size:16.5px;line-height:23px;color:#c9cbce;letter-spacing:-0.203px;">SEO &amp; Settings</div>
<svg class="a" style="left:898.0px;top:132.0px" width="30" height="30" viewBox="0 0 24 24"><path fill="#fff" d="M3 17v2h6v-2zM3 5v2h10V5zm10 16v-2h8v-2h-8v-2h-2v6zM7 9v2H3v2h4v2h2V9zm14 4v-2H11v2zm-6-4h2V7h4V5h-4V3h-2z" /></svg>
<div class="a t" style="left:934.60px;top:135.00px;font-size:16.5px;line-height:23px;color:#c9cbce;letter-spacing:0.288px;">Navigation &amp; Properties</div>
<svg class="a" style="left:1148.5px;top:131.5px" width="30" height="30" viewBox="0 0 24 24"><path fill="#fff" d="m16.7 4.5 2.8 2.8-2.8 2.8-2.8-2.8zM9 5v4H5V5zm10 10v4h-4v-4zM16.7 1.7 11 7.3l5.7 5.7H13v8h8v-8h-4.3l5.6-5.7zM11 3H3v8h8zM9 15v4H5v-4zm2-2H3v8h8z" /></svg>
<div class="a t" style="left:1185.86px;top:135.00px;font-size:16.5px;line-height:23px;color:#c9cbce;letter-spacing:0.243px;">Versions</div>
<div class="a" style="left:703px;top:124px;width:1px;height:45px;background:#6e7073;"></div>
<div class="a" style="left:884px;top:124px;width:1px;height:45px;background:#6e7073;"></div>
<div class="a" style="left:1135px;top:124px;width:1px;height:45px;background:#6e7073;"></div>
<div class="a" style="left:1270px;top:124px;width:1px;height:45px;background:#6e7073;"></div>
<div class="a" style="left:1333px;top:124px;width:1px;height:45px;background:#6e7073;"></div>
<div class="a" style="left:1395px;top:124px;width:1px;height:45px;background:#6e7073;"></div>
<div class="a" style="left:1458px;top:124px;width:1px;height:45px;background:#6e7073;"></div>
<div class="a" style="left:1520px;top:124px;width:1px;height:45px;background:#6e7073;"></div>
<div class="a" style="left:1583px;top:124px;width:1px;height:45px;background:#6e7073;"></div>
<svg class="a" style="left:1284.0px;top:131.5px" width="30" height="30" viewBox="0 0 24 24"><path fill="#fff" d="M19 3h-1V1h-2v2H8V1H6v2H5c-1.1 0-2 .9-2 2v14a2 2 0 0 0 2 2h14c1.11 0 2-.89 2-2V5a2 2 0 0 0-2-2m0 16H5V9h14zM5 7V5h14v2zm5.56 10.46 5.94-5.93-1.07-1.06-4.87 4.87-2.11-2.11-1.06 1.06z" /></svg>
<svg class="a" style="left:1346.0px;top:131.5px" width="30" height="30" viewBox="0 0 24 24"><path fill="#fff" d="m17 18-5-2.18L7 18V5h10m0-2H7a2 2 0 0 0-2 2v16l7-3 7 3V5a2 2 0 0 0-2-2" /></svg>
<svg class="a" style="left:1409.0px;top:131.5px" width="30" height="30" viewBox="0 0 24 24"><path fill="#fff" d="M11 2v20c-5.1-.5-9-4.8-9-10s3.9-9.5 9-10m2 0v9h9c-.5-4.8-4.2-8.5-9-9m0 11v9c4.7-.5 8.5-4.2 9-9z" transform="matrix(1 0 0 -1 0 24)" /></svg>
<svg class="a" style="left:1471.0px;top:131.5px" width="30" height="30" viewBox="0 0 24 24"><path fill="#fff" d="M19 3h-4.18C14.4 1.84 13.3 1 12 1s-2.4.84-2.82 2H5a2 2 0 0 0-2 2v14a2 2 0 0 0 2 2h14a2 2 0 0 0 2-2V5a2 2 0 0 0-2-2m-7 0a1 1 0 0 1 1 1 1 1 0 0 1-1 1 1 1 0 0 1-1-1 1 1 0 0 1 1-1M7 7h10V5h2v14H5V5h2z" /></svg>
<svg class="a" style="left:1471px;top:131.5px;" width="30" height="30" viewBox="0 0 30 30"><path d="M9.300 13.700h2.400v2.400H9.300zM13.600 14h7.300v1.800h-7.300zM9.300 19h2.400v2.400H9.300zM13.600 19.300h7.300v1.800h-7.300z" fill="#fff"/></svg>
<svg class="a" style="left:1534.0px;top:131.5px" width="30" height="30" viewBox="0 0 24 24"><path fill="#fff" d="m21.41 11.58-9-9A2 2 0 0 0 11 2H4a2 2 0 0 0-2 2v7a2 2 0 0 0 .59 1.42l9 9A2 2 0 0 0 13 22a2 2 0 0 0 1.41-.59l7-7A2 2 0 0 0 22 13a2 2 0 0 0-.59-1.42M13 20l-9-9V4h7l9 9M6.5 5A1.5 1.5 0 1 1 5 6.5 1.5 1.5 0 0 1 6.5 5" /></svg>
<svg class="a" style="left:1596px;top:131.5px;" width="30" height="30" viewBox="0 0 30 30"><g fill="none" stroke="#fff" stroke-width="2.300" stroke-linejoin="round"><rect x="5" y="6.200" width="20" height="20.300" rx="2"/><path d="M9.800 2.500v3.500M20.200 2.500v3.500"/><circle cx="15" cy="13" r="2.700" stroke-width="2"/></g><path d="M9 22.300c0-2.600 3.300-4.200 6-4.200s6 1.600 6 4.200v.700H9z" fill="#fff"/></svg>
<!-- content_frame -->
<div class="a" style="left:463px;top:169px;width:1445px;height:909px;background:#f5f5f5;"></div>
<div class="a" style="left:463px;top:1078px;width:1457px;height:2px;background:#3a3d40;"></div>
<div class="a" style="left:75px;top:1078px;width:388px;height:2px;background:#242628;"></div>
<div class="a" style="left:185px;top:1078px;width:40px;height:2px;background:#515354;"></div>
<div class="a" style="left:226px;top:1078px;width:4px;height:2px;background:#3a3c3e;"></div>
<div class="a" style="left:0px;top:1078px;width:75px;height:2px;background:#2a1c3c;"></div>
<div class="a" style="left:473px;top:183px;width:40px;height:40px;background:#3a3d41;"></div>
<svg class="a" style="left:480.5px;top:190.4px;" width="25" height="25" viewBox="0 0 25 25"><circle cx="12.500" cy="12.500" r="12.500" fill="#2ba150"/><path d="M12.500 6.500v12M6.500 12.500h12" stroke="#fff" stroke-width="2.600"/></svg>
<div class="a" style="left:473px;top:229px;width:40px;height:40px;background:#f5f5f5;box-sizing:border-box;border:1px solid #e4e4e4"></div>
<div class="a" style="left:473px;top:276px;width:40px;height:40px;background:#f5f5f5;box-sizing:border-box;border:1px solid #e4e4e4"></div>
<div class="a" style="left:473px;top:324px;width:40px;height:40px;background:#f5f5f5;box-sizing:border-box;border:1px solid #e4e4e4"></div>
<div class="a" style="left:473px;top:985px;width:40px;height:40px;background:#f5f5f5;box-sizing:border-box;border:1px solid #e4e4e4"></div>
<div class="a" style="left:473px;top:1033px;width:40px;height:40px;background:#f5f5f5;box-sizing:border-box;border:1px solid #e4e4e4"></div>
<svg class="a" style="left:478.0px;top:233.7px" width="30" height="30" viewBox="0 0 24 24"><path fill="#2ba150" d="M12 18a6 6 0 0 1-6-6c0-1 .25-1.97.7-2.8L5.24 7.74A7.93 7.93 0 0 0 4 12a8 8 0 0 0 8 8v3l4-4-4-4m0-11V1L8 5l4 4V6a6 6 0 0 1 6 6c0 1-.25 1.97-.7 2.8l1.46 1.46A7.93 7.93 0 0 0 20 12a8 8 0 0 0-8-8" /></svg>
<svg class="a" style="left:478px;top:281px;" width="30" height="30" viewBox="0 0 30 30"><g fill="#f3da2c"><circle cx="15" cy="14" r="7.600"/><path d="M10.500 17h9l-1.300 5.300h-6.400z"/><ellipse cx="15" cy="2.300" rx="1.200" ry="1.900"/><ellipse cx="6.400" cy="5.800" rx="1.200" ry="1.900" transform="rotate(-50 6.400 5.800)"/><ellipse cx="23.600" cy="5.800" rx="1.200" ry="1.900" transform="rotate(50 23.600 5.800)"/><ellipse cx="3" cy="14" rx="1.900" ry="1.200"/><ellipse cx="27" cy="14" rx="1.900" ry="1.200"/></g><path d="M11.700 22h6.600v2.600a1.500 1.500 0 0 1-1.500 1.500h-3.600a1.500 1.500 0 0 1-1.500-1.500z" fill="#9b9b9b"/><rect x="11.700" y="23.300" width="6.600" height="1" fill="#6f6f6f"/></svg>
<svg class="a" style="left:478px;top:329px;" width="30" height="30" viewBox="0 0 30 30"><path d="M8 9.800l6-3 2.200 1.600 6 3.500z" fill="#ee3a24"/><path d="M7.300 4.300l1-1.600 13.300 7.600-1 1.700z" fill="#a8a8a8"/><path d="M11.500 4l1.200-1.700 4 2.300-1 1.700z" fill="#9a9a9a"/><path d="M7 11.500h16v13.500a2.500 2.500 0 0 1-2.500 2.500h-11A2.500 2.500 0 0 1 7 25z" fill="#b5b5b5"/><path d="M10.800 13.500h2.400v11.500h-2.400zM16.800 13.500h2.400v11.500h-2.400z" fill="#858585"/></svg>
<svg class="a" style="left:483.5px;top:990.5px;" width="32" height="30" viewBox="0 0 32 30"><circle cx="11" cy="9.500" r="4.300" fill="#2979ff"/><path d="M2 22.500c0-4 4.500-6.300 9-6.300s9 2.300 9 6.300v1.500H2z" fill="#2979ff"/><circle cx="22.300" cy="10.500" r="3.300" fill="#2ba150"/><path d="M19 16.600c1-.3 2.200-.500 3.300-.500 3.500 0 7.200 1.900 7.200 5.300V24h-8v-1.500c0-2.400-1-4.500-2.500-5.900z" fill="#2ba150"/></svg>
<svg class="a" style="left:478px;top:1038px;" width="30" height="30" viewBox="0 0 30 30"><path d="M7.300 4.300l1-1.600 13.300 7.600-1 1.700z" fill="#a8a8a8"/><path d="M8 9.800l6-3 2.200 1.600 6 3.500z" fill="#ee3a24"/><path d="M7 11.500h16v13.500a2.500 2.500 0 0 1-2.500 2.500h-11A2.500 2.500 0 0 1 7 25z" fill="#b5b5b5"/><path d="M10.800 13.500h2.400v11.500h-2.400zM16.800 13.500h2.400v11.500h-2.400z" fill="#858585"/></svg>
<div class="a" style="left:523px;top:181px;width:1364px;height:897px;background:#f5f7f7;"></div>
<div class="a" style="left:1887px;top:181px;width:21px;height:897px;background:#f1f1f1;"></div>
<div class="a" style="left:1889px;top:202px;width:17px;height:159px;background:#c1c1c1;"></div>
<svg class="a" style="left:1892.5px;top:189.7px;" width="10" height="6" viewBox="0 0 10 6"><path d="M0 6l5-6 5 6z" fill="#a3a3a3"/></svg>
<svg class="a" style="left:1892.8px;top:1069.8px;" width="9.5" height="5.5" viewBox="0 0 9.5 5.5"><path d="M0 0l4.750 5.500 4.750-5.500z" fill="#505050"/></svg>
<!-- site_header -->
<div class="a" style="left:523px;top:181px;width:1364px;height:127.5px;background:#262626;"></div>
<svg class="a" style="left:619.7px;top:193.8px;" width="96" height="92" viewBox="0 0 96 92"><defs><clipPath id="lgc"><path d="M48 46V77.500A31.500 31.500 0 1 1 79.500 46z"/></clipPath></defs><path d="M48 87.400A41.400 41.400 0 1 1 89.400 46" fill="none" stroke="#fff" stroke-width="5"/><path d="M48 46V77.500A31.500 31.500 0 1 1 79.500 46z" fill="#fff"/><g clip-path="url(#lgc)"><g transform="rotate(-45 48 46)"><rect x="10" y="19.600" width="76" height="3" fill="#262626"/><rect x="10" y="44.500" width="76" height="3" fill="#262626"/></g></g><text x="48" y="39.200" text-anchor="middle" font-family="Liberation Sans,sans-serif" font-size="15.400" fill="#262626" stroke="#262626" stroke-width="0.300" letter-spacing="0" transform="rotate(-45 48 46)">DEMO</text></svg>
<div class="a t" style="left:673.67px;top:242.00px;font-size:20.3px;line-height:28px;color:#fff;font-weight:400;letter-spacing:0.217px;transform:scaleX(1.1000);transform-origin:0 0;-webkit-text-stroke:0.600px #fff;">PIMCORE</div>
<div class="a t" style="left:674.90px;top:266.00px;font-size:16px;line-height:22px;color:#fff;font-weight:400;transform:scaleX(0.8842);transform-origin:0 0;-webkit-text-stroke:0.550px #fff;">CLASSIC CARS</div>
<div class="a t" style="left:823.85px;top:217.00px;font-size:20.5px;line-height:29px;color:#f2f2f2;letter-spacing:-0.079px;">Find &amp;</div>
<div class="a t" style="left:824.18px;top:248.00px;font-size:20.5px;line-height:29px;color:#f2f2f2;letter-spacing:-0.200px;">Order</div>
<div class="a t" style="left:1003.08px;top:217.00px;font-size:20.5px;line-height:29px;color:#f2f2f2;letter-spacing:-0.288px;">Magazine</div>
<div class="a t" style="left:1168.92px;top:217.00px;font-size:20.5px;line-height:29px;color:#f2f2f2;letter-spacing:0.313px;">News</div>
<div class="a t" style="left:1299.58px;top:217.00px;font-size:20.5px;line-height:29px;color:#f2f2f2;letter-spacing:-0.367px;">Events</div>
<div class="a t" style="left:1439.32px;top:217.00px;font-size:20.5px;line-height:29px;color:#f2f2f2;letter-spacing:0.642px;">More</div>
<div class="a t" style="left:1439.64px;top:248.00px;font-size:20.5px;line-height:29px;color:#f2f2f2;letter-spacing:0.583px;">Stuff</div>
<svg class="a" style="left:1570px;top:180px;" width="240" height="120" viewBox="0 0 240 120"><circle cx="36.500" cy="66.250" r="11.600" fill="none" stroke="#fff" stroke-width="1.900"/><path d="M43.500 76.500l5.200 6.600" stroke="#fff" stroke-width="2.200"/><circle cx="91.900" cy="60.700" r="6.900" fill="none" stroke="#fff" stroke-width="1.900"/><path d="M80 84c0-7 5.300-11.800 11.900-11.800S103.800 77 103.800 84z" fill="none" stroke="#fff" stroke-width="1.900" stroke-linejoin="round"/><path d="M136.200 61.200h23l-3.200 13.900h-15.300z" fill="none" stroke="#fff" stroke-width="1.900" stroke-linejoin="round"/><path d="M159.300 61.400c1-3 1.500-5.500 1.600-8.400" fill="none" stroke="#fff" stroke-width="1.900"/><circle cx="142.500" cy="82.100" r="2.500" fill="none" stroke="#fff" stroke-width="1.700"/><circle cx="151.900" cy="82.100" r="2.500" fill="none" stroke="#fff" stroke-width="1.700"/><g fill="none" stroke="#e8e8e8" stroke-width="1"><circle cx="203.750" cy="66.500" r="12"/><ellipse cx="203.750" cy="66.500" rx="4.600" ry="12"/><path d="M191.750 66.500h24M203.750 54.500v24M194 59.800c6 2.400 13.500 2.400 19.500 0M194 73.200c6-2.400 13.500-2.400 19.500 0"/></g></svg>
<!-- sidebar -->
<div class="a t" style="left:622.98px;top:380.00px;font-size:28px;line-height:39px;color:#22252a;letter-spacing:0.054px;-webkit-text-stroke:0.250px #22252a;">Magazine</div>
<div class="a" style="left:624px;top:449px;width:262px;height:322px;background:#fff;border-radius:9px"></div>
<div class="a" style="left:880px;top:461px;width:6px;height:43px;background:#4b0082;"></div>
<div class="a t" style="left:648.56px;top:466.00px;font-size:18.8px;line-height:26px;color:#4b0a82;font-weight:700;letter-spacing:-0.015px;">Lifestyle</div>
<div class="a t" style="left:648.94px;top:509.00px;font-size:18.8px;line-height:26px;color:#6e707d;letter-spacing:0.257px;">Culture</div>
<div class="a t" style="left:649.36px;top:551.00px;font-size:18.8px;line-height:26px;color:#6e707d;letter-spacing:-0.153px;">Trends</div>
<div class="a t" style="left:649.59px;top:594.00px;font-size:18.8px;line-height:26px;color:#6e707d;letter-spacing:0.291px;">Auctions</div>
<div class="a t" style="left:648.94px;top:636.00px;font-size:18.8px;line-height:26px;color:#6e707d;letter-spacing:-0.301px;">Car Gallery</div>
<div class="a t" style="left:648.20px;top:679.00px;font-size:18.8px;line-height:26px;color:#6e707d;letter-spacing:0.170px;">Pick of the Day</div>
<div class="a t" style="left:648.60px;top:721.00px;font-size:18.8px;line-height:26px;color:#6e707d;letter-spacing:-0.069px;">Submit a Car</div>
<div class="a" style="left:625px;top:810px;width:260px;height:268px;background:#fff;border-radius:13px 13px 0 0;box-shadow:0 0 3px rgba(0,0,0,.18)"></div>
<div class="a t" style="left:687.96px;top:1012.00px;font-size:23px;line-height:32px;color:#22252a;font-weight:700;letter-spacing:3.033px;">POPULAR</div>
<div class="a t" style="left:696.64px;top:1039.00px;font-size:23px;line-height:32px;color:#22252a;font-weight:700;letter-spacing:3.209px;">BRANDS</div>
<!-- article -->
<div class="a t" style="left:923.26px;top:368.00px;font-size:18.5px;line-height:26px;color:#6a2cb8;letter-spacing:0.701px;">Home</div>
<div class="a t" style="left:979.32px;top:368.00px;font-size:18.5px;line-height:26px;color:#22252a;">&gt;</div>
<div class="a t" style="left:994.56px;top:368.00px;font-size:18.5px;line-height:26px;color:#6a2cb8;letter-spacing:0.422px;">Magazine</div>
<div class="a t" style="left:1082.32px;top:368.00px;font-size:18.5px;line-height:26px;color:#22252a;">&gt;</div>
<div class="a t" style="left:1097.11px;top:368.00px;font-size:18.5px;line-height:26px;color:#22252a;letter-spacing:0.611px;">Lifestyle</div>
<div class="a t" style="left:924.29px;top:416.00px;font-size:60px;line-height:84px;color:#22252a;font-weight:700;letter-spacing:2.100px;transform:scaleX(0.8937);transform-origin:0 0;">LIFESTYLE</div>
<div class="a t" style="left:923.16px;top:571.00px;font-size:36px;line-height:50px;color:#22252a;font-weight:700;letter-spacing:-0.810px;">Happy ride: Going on a road trip</div>
<svg class="a" style="left:1450.1px;top:573px;" width="30" height="30" viewBox="0 0 30 30"><circle cx="15" cy="15" r="9.2" fill="none" stroke="#ee3a24" stroke-width="2.3"/><circle cx="15" cy="15" r="4.3" fill="#ee3a24"/><path d="M15 1.0v4.5M15 29.0v-4.5M1.0 15h4.5M29.0 15h-4.5" stroke="#ee3a24" stroke-width="2.3"/></svg>
<div class="a t" style="left:923.48px;top:647.00px;font-size:18px;line-height:25px;color:#22252a;letter-spacing:0.621px;">Lorem ipsum dolor sit amet, consectetuer adipiscing elit. Aenean</div>
<div class="a t" style="left:924.31px;top:677.00px;font-size:18px;line-height:25px;color:#22252a;letter-spacing:0.517px;">commodo ligula eget dolor. Aenean massa. Cum sociis natoque</div>
<div class="a t" style="left:923.71px;top:707.00px;font-size:18px;line-height:25px;color:#22252a;letter-spacing:0.621px;">penatibus et magnis dis parturient montes, nascetur ridiculus</div>
<div class="a t" style="left:923.75px;top:737.00px;font-size:18px;line-height:25px;color:#22252a;letter-spacing:0.513px;">mus. Donec quam felis, ultricies nec, pellentesque eu, pretium</div>
<div class="a t" style="left:924.32px;top:767.00px;font-size:18px;line-height:25px;color:#22252a;letter-spacing:0.216px;">quis, sem.</div>
<div class="a t" style="left:923.48px;top:816.00px;font-size:18px;line-height:25px;color:#22252a;letter-spacing:0.473px;">Nulla consequat massa quis enim. Donec pede justo, fringilla vel,</div>
<div class="a t" style="left:924.28px;top:846.00px;font-size:18px;line-height:25px;color:#22252a;letter-spacing:0.567px;">aliquet nec, vulputate eget, arcu. In enim justo, rhoncus ut,</div>
<div class="a t" style="left:923.78px;top:876.00px;font-size:18px;line-height:25px;color:#22252a;letter-spacing:0.590px;">imperdiet a, venenatis vitae, justo. Nullam dictum felis eu pede</div>
<div class="a t" style="left:923.75px;top:906.00px;font-size:18px;line-height:25px;color:#22252a;letter-spacing:0.515px;">mollis pretium. Integer tincidunt. Cras dapibus. Vivamus</div>
<div class="a t" style="left:924.31px;top:936.00px;font-size:18px;line-height:25px;color:#22252a;letter-spacing:0.604px;">elementum semper nisi. Aenean vulputate eleifend tellus. Aenean</div>
<div class="a t" style="left:923.78px;top:966.00px;font-size:18px;line-height:25px;color:#22252a;letter-spacing:0.621px;">leo ligula, porttitor eu, consequat vitae, eleifend ac, enim.</div>
<div class="a" style="left:1524px;top:579px;width:211px;height:40px;background:transparent;box-sizing:border-box;border:1px solid #e6e7e7"></div>
<div class="a" style="left:1579px;top:579px;width:1px;height:40px;background:#e6e7e7;"></div>
<div class="a" style="left:1618px;top:579px;width:1px;height:40px;background:#e6e7e7;"></div>
<div class="a" style="left:1657px;top:579px;width:1px;height:40px;background:#e6e7e7;"></div>
<div class="a" style="left:1695px;top:579px;width:1px;height:40px;background:#e6e7e7;"></div>
<div class="a" style="left:1525px;top:580px;width:54px;height:38px;background:#f8f9f9;"></div>
<div class="a t" style="left:1530.69px;top:587.00px;font-size:17.5px;line-height:24px;color:#c9c9c9;">1</div>
<svg class="a" style="left:1559.5px;top:593px;" width="11.5" height="6.5" viewBox="0 0 11.5 6.5"><path d="M0 0h11.500l-5.750 6.500z" fill="#cfcfcf"/></svg>
<svg class="a" style="left:1586.6px;top:586.2px;" width="25" height="25" viewBox="0 0 25 25"><circle cx="12.500" cy="12.500" r="12.500" fill="#b8dfc5"/><path d="M12.500 6.500v12M6.500 12.500h12" stroke="#fff" stroke-width="2.400"/></svg>
<svg class="a" style="left:1624.7px;top:586.2px;" width="25" height="25" viewBox="0 0 25 25"><circle cx="12.500" cy="12.500" r="12.500" fill="#f5bab3"/><path d="M8 8l9 9M17 8l-9 9" stroke="#fff" stroke-width="2.400"/></svg>
<svg class="a" style="left:1664px;top:591px;" width="24" height="14" viewBox="0 0 24 14"><path d="M1.500 12.500L12 2.500 22.500 12.500" fill="none" stroke="#e0e1e1" stroke-width="2.600"/></svg>
<svg class="a" style="left:1703px;top:592.5px;" width="24" height="14" viewBox="0 0 24 14"><path d="M1.500 1.500L12 11.500 22.500 1.500" fill="none" stroke="#e0e1e1" stroke-width="2.600"/></svg>
<div class="a" style="left:1524px;top:876px;width:211px;height:40px;background:transparent;box-sizing:border-box;border:1px solid #e6e7e7"></div>
<div class="a" style="left:1579px;top:876px;width:1px;height:40px;background:#e6e7e7;"></div>
<div class="a" style="left:1618px;top:876px;width:1px;height:40px;background:#e6e7e7;"></div>
<div class="a" style="left:1657px;top:876px;width:1px;height:40px;background:#e6e7e7;"></div>
<div class="a" style="left:1695px;top:876px;width:1px;height:40px;background:#e6e7e7;"></div>
<div class="a" style="left:1525px;top:877px;width:54px;height:38px;background:#f8f9f9;"></div>
<div class="a t" style="left:1530.69px;top:884.00px;font-size:17.5px;line-height:24px;color:#c9c9c9;">1</div>
<svg class="a" style="left:1559.5px;top:890px;" width="11.5" height="6.5" viewBox="0 0 11.5 6.5"><path d="M0 0h11.500l-5.750 6.500z" fill="#cfcfcf"/></svg>
<svg class="a" style="left:1586.6px;top:883.2px;" width="25" height="25" viewBox="0 0 25 25"><circle cx="12.500" cy="12.500" r="12.500" fill="#b8dfc5"/><path d="M12.500 6.500v12M6.500 12.500h12" stroke="#fff" stroke-width="2.400"/></svg>
<svg class="a" style="left:1624.7px;top:883.2px;" width="25" height="25" viewBox="0 0 25 25"><circle cx="12.500" cy="12.500" r="12.500" fill="#f5bab3"/><path d="M8 8l9 9M17 8l-9 9" stroke="#fff" stroke-width="2.400"/></svg>
<svg class="a" style="left:1664px;top:888px;" width="24" height="14" viewBox="0 0 24 14"><path d="M1.500 12.500L12 2.500 22.500 12.500" fill="none" stroke="#e0e1e1" stroke-width="2.600"/></svg>
<svg class="a" style="left:1703px;top:889.5px;" width="24" height="14" viewBox="0 0 24 14"><path d="M1.500 1.500L12 11.500 22.500 1.500" fill="none" stroke="#e0e1e1" stroke-width="2.600"/></svg>
<!-- images -->
<svg class="a" style="left:1524px;top:644px;" width="262" height="174" viewBox="0 0 262 174"><defs><filter id="lf1" x="0" y="0" width="100%" height="100%" color-interpolation-filters="sRGB"><feTurbulence type="fractalNoise" baseFrequency="0.170" numOctaves="3" seed="11" result="n"/><feColorMatrix in="n" type="matrix" values="2.100 0 0 0 -0.330  1.400 0 0 0 0.060  0 0 0.300 0 0.030  0 6 0 0 -2.050" result="c"/><feGaussianBlur in="SourceAlpha" stdDeviation="2.500" result="m"/><feComposite in="c" in2="m" operator="in"/></filter><filter id="lf2" x="0" y="0" width="100%" height="100%" color-interpolation-filters="sRGB"><feTurbulence type="fractalNoise" baseFrequency="0.260" numOctaves="3" seed="4" result="n"/><feColorMatrix in="n" type="matrix" values="1.300 0 0 0 -0.280  1.250 0 0 0 -0.050  0.500 0 0 0 -0.100  0 6 0 0 -1.600" result="c"/><feGaussianBlur in="SourceAlpha" stdDeviation="1.500" result="m"/><feComposite in="c" in2="m" operator="in"/></filter><filter id="bk" x="0" y="0" width="100%" height="100%" color-interpolation-filters="sRGB"><feTurbulence type="fractalNoise" baseFrequency="0.090 0.550" numOctaves="2" seed="2" result="n"/><feColorMatrix in="n" type="matrix" values="0.800 0 0 0 0.060  0.480 0 0 0 0.010  0.250 0 0 0 -0.030  0 0 0 0 1" result="c"/><feComposite in="c" in2="SourceAlpha" operator="in"/></filter><filter id="rdn" x="0" y="0" width="100%" height="100%" color-interpolation-filters="sRGB"><feTurbulence type="fractalNoise" baseFrequency="0.035 0.140" numOctaves="3" seed="9" result="n"/><feColorMatrix in="n" type="matrix" values="1.400 0 0 0 -0.460  1.350 0 0 0 -0.450  1.350 0 0 0 -0.430  0 0 0 0 1" result="c"/><feComposite in="c" in2="SourceAlpha" operator="in"/></filter><filter id="b1"><feGaussianBlur stdDeviation="0.700"/></filter><filter id="b2"><feGaussianBlur stdDeviation="1.500"/></filter><filter id="rg1" x="-20%" y="-20%" width="140%" height="140%"><feTurbulence type="fractalNoise" baseFrequency="0.180" numOctaves="2" seed="7"/><feDisplacementMap in="SourceGraphic" scale="8"/><feGaussianBlur stdDeviation="0.600"/></filter><linearGradient id="brickd" x1="0" x2="1"><stop offset="0" stop-color="#000" stop-opacity=".380"/><stop offset=".300" stop-color="#000" stop-opacity=".050"/><stop offset="1" stop-color="#000" stop-opacity="0"/></linearGradient><linearGradient id="carb" x1="0" y1="0" x2="0" y2="1"><stop offset="0" stop-color="#f7a428"/><stop offset=".600" stop-color="#f0931a"/><stop offset="1" stop-color="#d97a0c"/></linearGradient><clipPath id="c1"><rect width="262" height="174"/></clipPath></defs><g clip-path="url(#c1)"><rect width="262" height="174" fill="#fefefe"/><g filter="url(#b1)"><rect x="0" y="38" width="60" height="26" fill="#9fb0e0"/><rect x="0" y="34" width="24" height="8" fill="#c5d0ec"/><path d="M0 50h120v13H0z" fill="#8b9fd8"/><path d="M5 50h3v12H5zM14 50h3v12h-3zM24 50h3v12h-3zM36 50h3v12h-3zM50 50h3v12h-3zM62 50h3v12h-3zM76 50h3v12h-3zM88 50h3v12h-3z" fill="#dfe6f6"/><rect x="91" y="24.500" width="29" height="12" fill="#dc8573"/><rect x="94" y="27" width="16" height="3" fill="#c9d2ea"/><rect x="112" y="24" width="14" height="2" fill="#e9a090"/><rect x="103" y="36" width="9" height="4" fill="#3a6ac0"/><rect x="143" y="30" width="17" height="32" fill="#f2e6ac"/><rect x="160" y="26" width="42" height="36" fill="#b3b9d6"/><rect x="160" y="30" width="42" height="2" fill="#e1e4f0"/><rect x="160" y="37" width="42" height="2" fill="#e1e4f0"/><rect x="160" y="44" width="42" height="2" fill="#e1e4f0"/><rect x="200" y="22" width="45" height="32" fill="#cbd3e8"/><rect x="203" y="44" width="30" height="16" fill="#f5dfa5"/><rect x="118" y="52" width="40" height="9" fill="#e6e9f4"/><rect x="132" y="55" width="13" height="5" fill="#a8322c"/></g><g filter="url(#lf2)"><ellipse cx="124" cy="50" rx="44" ry="15"/><ellipse cx="72" cy="56" rx="24" ry="10"/><ellipse cx="160" cy="57" rx="14" ry="8"/><ellipse cx="210" cy="56" rx="30" ry="8"/></g><g filter="url(#rg1)"><ellipse cx="12" cy="47" rx="13" ry="8" fill="#4c9a3c"/><ellipse cx="181" cy="52" rx="14" ry="9" fill="#2f7a45"/><ellipse cx="222" cy="59" rx="14" ry="6" fill="#3f8240"/><ellipse cx="250" cy="48" rx="14" ry="15" fill="#1f5a35"/><ellipse cx="70" cy="58" rx="16" ry="6" fill="#4f7a30" opacity=".800"/><ellipse cx="136" cy="56" rx="22" ry="7" fill="#5a8034" opacity=".700"/></g><g filter="url(#lf1)"><path d="M0 0h54c-2 8 4 12 8 18 6 8 10 14 14 22 4 10-2 16-10 14-10-2-16-10-24-14-10-4-18-8-24-16C12 20 6 24 0 22z"/><ellipse cx="50" cy="42" rx="18" ry="12"/><ellipse cx="20" cy="16" rx="24" ry="18"/><ellipse cx="92" cy="54" rx="12" ry="6"/><path d="M160 0h102v12c-8 6-16 2-24 8-8 5-14-1-22 4-10 5-16 1-26-4-8-4-16-2-22-10-4-5-8-6-8-10z"/><ellipse cx="204" cy="34" rx="9" ry="9"/><ellipse cx="236" cy="8" rx="24" ry="9"/></g><rect x="0" y="62" width="262" height="7.500" fill="#8f8577"/><rect x="0" y="62" width="262" height="1.500" fill="#b9b4ac"/><rect x="0" y="69" width="262" height="26" filter="url(#bk)"/><rect x="0" y="69" width="262" height="26" fill="url(#brickd)"/><rect x="0" y="93" width="262" height="81" filter="url(#rdn)"/><path d="M0 82h96v11H0z" fill="#97907f"/><path d="M190 93h72v13h-72z" fill="#9b9484"/><path d="M190 106h72v5h-72z" fill="#6a5a4e"/><path d="M0 93h100v12H0z" fill="#6d5c50"/><path d="M0 103l78 11v8L0 111z" fill="#2f2b2c"/><path d="M0 113l80 9v6H0z" fill="#8d8782" opacity=".450"/><g filter="url(#b2)"><rect x="236" y="108" width="26" height="14" fill="#4a4340"/><rect x="225" y="126" width="37" height="9" fill="#2c292a"/></g><ellipse cx="150" cy="135" rx="84" ry="6" fill="#1c1a1b"/><path d="M76 120c1-8 6-14 12-17l9-21c3-6 8-9 15-10h42c8 0 13 2 17 7l15 17c14 2 28 6 39 12 5 3 8 8 8 14v9c0 3-2 5-5 5H80c-3 0-5-2-5-5z" fill="url(#carb)"/><path d="M112 71h46c4 0 6 .500 8 1.500l-54 .500z" fill="#1c1712"/><path d="M172 97c16 1 36 5 52 12l-3 8c-16-5-34-8-47-8z" fill="#f8b040"/><path d="M98.500 96l7-14c1-2 3-3 5-3h10v17.500z" fill="#3a3a38"/><path d="M103 92l5-10c1-2 2-2.500 4-2.500h6z" fill="#cfd3d4"/><path d="M124 79h26c5 0 8 2 10 6l1.500 13H124z" fill="#4a4540"/><path d="M128 82h14v13h-14z" fill="#b9b4a5"/><path d="M146 80h2v18h-2z" fill="#d8d8d8"/><path d="M162 75l7 1 22 19-22 3z" fill="#d3d7d8"/><path d="M166 80l14 15-9 1z" fill="#8f9696"/><rect x="117" y="103" width="7" height="1.800" rx=".900" fill="#5a3a10"/><path d="M125 100v30M163 99c2 12 2 24 0 36" fill="none" stroke="#c97408" stroke-width=".800"/><rect x="192" y="87" width="2.500" height="6" fill="#222"/><path d="M79 135c0-10 6-17 14-17s14 7 14 17z" fill="#1a1512"/><circle cx="92.500" cy="130" r="9.500" fill="#222"/><circle cx="92.500" cy="130" r="5.500" fill="#c9c9c9"/><circle cx="92.500" cy="130" r="2" fill="#666"/><path d="M169 135c0-9 7-15 15.500-15s15.500 6 15.500 15z" fill="#1a1512"/><ellipse cx="226" cy="122" rx="2.300" ry="4" fill="#e6e6e6"/><circle cx="224" cy="131" r="2" fill="#e0e0e0"/><path d="M215 134l32-8v4l-30 7z" fill="#d0d0d0"/><rect x="0" y="135" width="262" height="39" fill="#dadada" opacity=".930"/><g filter="url(#b2)" opacity=".700"><ellipse cx="60" cy="160" rx="50" ry="4" fill="#e6e6e6"/><ellipse cx="215" cy="158" rx="40" ry="5" fill="#e2e2e2"/><circle cx="184.500" cy="143" r="8" fill="#e8e8e8"/></g><circle cx="184.500" cy="143" r="9" fill="none" stroke="#cfcfcf" stroke-width="1.200" opacity=".900"/><rect x="0" y="173" width="262" height="1" fill="#1e1e1e"/><rect x="0" y="135" width="1" height="39" fill="#bdbdbd"/><rect x="261" y="135" width="1" height="39" fill="#bdbdbd"/></g></svg>
<svg class="a" style="left:1728.7px;top:648.7px;" width="30" height="30" viewBox="0 0 30 30"><circle cx="15" cy="15" r="9.2" fill="none" stroke="#ee3a24" stroke-width="2.3"/><circle cx="15" cy="15" r="4.3" fill="#ee3a24"/><path d="M15 1.0v4.5M15 29.0v-4.5M1.0 15h4.5M29.0 15h-4.5" stroke="#ee3a24" stroke-width="2.3"/></svg>
<svg class="a" style="left:1761.3px;top:648.4px;" width="20" height="32" viewBox="0 0 20 32"><path d="M10 4v20.700" stroke="#2ba150" stroke-width="2.500"/><path d="M2.600 11.800l7.400-7.400 7.400 7.400" fill="none" stroke="#2ba150" stroke-width="2.500"/><rect x="1.200" y="27.700" width="17.600" height="2.400" fill="#d2d3d3"/></svg>
<svg class="a" style="left:625px;top:810px;" width="260" height="174" viewBox="0 0 260 174"><defs><clipPath id="c2"><path d="M0 13A13 13 0 0 1 13 0h234a13 13 0 0 1 13 13v161H0z"/></clipPath><linearGradient id="rd" x1="0" y1="0" x2="0" y2="1"><stop offset="0" stop-color="#7a6672"/><stop offset="1" stop-color="#5e5260"/></linearGradient><filter id="b5"><feGaussianBlur stdDeviation="0.600"/></filter><filter id="nz" x="0" y="0" width="100%" height="100%"><feTurbulence type="fractalNoise" baseFrequency="0.300" numOctaves="3" seed="5"/><feColorMatrix type="matrix" values="0 0 0 0 0  0 0 0 0 0  0 0 0 0 0  2.200 0 0 0 -0.800"/></filter></defs><g clip-path="url(#c2)"><g filter="url(#b5)"><rect x="0" y="0" width="39" height="140" fill="#e58375"/><rect x="0" y="0" width="39" height="12" fill="#c96a60"/><rect x="0" y="62" width="39" height="6" fill="#d9695e"/><rect x="0" y="40" width="39" height="22" fill="#c8665c"/><path d="M11 28h7v22h-7zM25 32h8v18h-8z" fill="#5a3038"/><rect x="0" y="52" width="39" height="10" fill="#3f3a44" opacity=".750"/><path d="M4 132V98c0-5 3-9 7-9s7 4 7 9v34zM21 132V96c0-5 3-9 7.500-9s7.500 4 7.500 9v36z" fill="#8a4a4a"/><path d="M7 132v-30c0-3 2-5 4-5s4 2 4 5v30zM25 132v-32c0-3 2-5 4-5s4 2 4 5v32z" fill="#3c2a30"/><rect x="38" y="0" width="80" height="140" fill="#1fb1c1"/><rect x="38" y="60" width="80" height="7" fill="#35c4d2"/><rect x="38" y="72" width="80" height="4" fill="#128a9a"/><rect x="38" y="44" width="80" height="14" fill="#0f7f8f" opacity=".700"/><path d="M48 20c0-4 2-6 4.500-6s4.500 2 4.500 6v26h-9zM69 13c0-4 2-6 4.500-6s4.500 2 4.500 6v28h-9zM94 5c0-3 2.500-5 5.500-5s5.500 2 5.500 5v40H94z" fill="#d7e3dc"/><path d="M50 22h5v24h-5zM71 15h5v24h-5zM96 8h7v36h-7z" fill="#8a9a90"/><path d="M42 136V96c0-6 3-10 7.500-10s7.500 4 7.500 10v40zM64 136V92c0-6 3.500-10 8-10s8 4 8 10v44zM92 136V88c0-6 3.500-10 8.500-10s8.500 4 8.500 10v48z" fill="#0d5f6a"/><path d="M45 136v-36c0-4 2-6 4.500-6s4.500 2 4.500 6v36zM67 136V96c0-4 2-7 5-7s5 3 5 7v40zM95 136V92c0-4 2.500-7 5.500-7s5.500 3 5.500 7v44z" fill="#1d2a30"/><rect x="96" y="82" width="10" height="5" fill="#d9d9d0"/><path d="M28 52l80-16v12L28 64z" fill="#1f3a44" opacity=".380"/><path d="M28 51l80-16v1.500L28 52.500z" fill="#16282e" opacity=".800"/><path d="M0 50l30-3v18l-30 4z" fill="#3a2a30" opacity=".500"/><g fill="#0c1a1e"><rect x="66" y="30" width="4.500" height="11" rx="1"/><rect x="82" y="30" width="4.500" height="11" rx="1"/><rect x="73.500" y="24" width="5" height="12" rx="1"/></g><rect x="117" y="0" width="143" height="140" fill="#e99669"/><rect x="117" y="32" width="143" height="10" fill="#f0a678"/><rect x="117" y="42" width="143" height="5" fill="#d9825a"/><rect x="117" y="0" width="133" height="30" fill="#e39a72"/><rect x="130" y="0" width="16" height="26" fill="#7a4038"/><rect x="160" y="0" width="20" height="22" fill="#8a5648"/><rect x="160" y="0" width="20" height="5" fill="#7f8fae"/><path d="M106 38l12-6 130-28v17L118 50l-12 4z" fill="#2e2f38"/><path d="M150 24l30-7v12l-30 7zM190 14l40-9v14l-40 9z" fill="#4a5560" opacity=".800"/><rect x="226" y="6" width="12" height="10" fill="#d9d9d9" opacity=".800"/><rect x="128" y="36" width="6" height="6" fill="#caa8c8"/><path d="M106 52l12-4 132-30v3L118 52l-12 4z" fill="#b86a50"/><path d="M125 140V84c0-11 6.500-19 14.500-19S154 73 154 84v56zM161 128V78c0-11 7-19 16-19s16 8 16 19v50zM203 118V70c0-11 8-19 18-19s18 8 18 19v48z" fill="#d98458"/><path d="M129 138V86c0-9 4.500-15 10.500-15S150 77 150 86v52zM165 112V80c0-9 5.500-15 12-15s12 6 12 15v32zM207 104V72c0-9 6.500-15 14-15s14 6 14 15v32z" fill="#33343a"/><path d="M139 78c4 0 7 4 8 9v50h-8z" fill="#1d6a72"/><path d="M131 100h7v34h-7z" fill="#7a8a80"/><path d="M220 62c5 0 9 5 10 11v31h-10z" fill="#7a4a3a"/><path d="M248 8h12v60h-6z" fill="#e99669"/><path d="M255 20h5v40h-3z" fill="#2aa8b0"/><path d="M72.500 40h5l1 78h3v10h4v8H64v-8h4v-10h3.500z" fill="#16262c"/><path d="M66 36h18l-2 14H68zM70 28h10v8H70z" fill="#101c22"/><rect x="64" y="136" width="20" height="7" fill="#bfb8b8"/><path d="M0 134h135v20H0z" fill="#d3aaa6"/><path d="M0 140l96 10 40 2v4H0z" fill="#8a6f78"/><path d="M0 134h130v4H0z" fill="#e0b9b2"/><path d="M0 144c40 4 80 8 140 11h120v19H0z" fill="url(#rd)"/><path d="M0 143c30 3 70 7 100 9l38 2v2c-50-2-100-6-138-10z" fill="#b79a9c"/><g><rect x="52" y="116" width="4.500" height="10" fill="#efefef"/><rect x="52.500" y="126" width="1.600" height="10" fill="#c79a80"/><rect x="55" y="126" width="1.600" height="10" fill="#c79a80"/><circle cx="54" cy="114" r="1.800" fill="#3a2a22"/><rect x="58" y="115" width="4.500" height="10" fill="#f4f4f4"/><rect x="58.500" y="125" width="1.600" height="10" fill="#e8e8e8"/><rect x="61" y="125" width="1.600" height="10" fill="#e8e8e8"/><circle cx="60" cy="113" r="1.800" fill="#2a1a12"/><path d="M98 117h5l1.500 12h-8z" fill="#e6e66a"/><rect x="98.500" y="129" width="1.600" height="10" fill="#d9a080"/><rect x="101.500" y="129" width="1.600" height="10" fill="#d9a080"/><circle cx="100.500" cy="114.500" r="2" fill="#d9a060"/><rect x="123" y="117" width="5.500" height="10" fill="#f2f2f2"/><rect x="123.500" y="127" width="5" height="4" fill="#2a8acb"/><rect x="124" y="131" width="1.600" height="7" fill="#c99070"/><rect x="126.500" y="131" width="1.600" height="7" fill="#c99070"/><circle cx="125.800" cy="114.500" r="2" fill="#e8e8e8"/><rect x="162" y="114" width="8" height="12" rx="2" fill="#f4f4f4"/><circle cx="166" cy="111" r="2.200" fill="#c98a6a"/><rect x="172" y="114" width="5" height="10" rx="2" fill="#e8c0a0"/><circle cx="174.500" cy="111.500" r="2.200" fill="#d96a40"/></g><path d="M133 150c-1-4 0-8 1-12 0-5 2-9 8-10l36-5c4-8 8-14 12-18 3-3 8-4 14-4h56v60l-8 2h-12c-14-1-30-3-44-4l-50-5c-8 0-12-1-13-4z" fill="#7d5dd2"/><path d="M134 138c12-3 28-5 44-6l40-1v24c-20-1-50-4-80-7z" fill="#6a48c0" opacity=".600"/><path d="M186 110c3-5 8-7 14-7h60v8h-72z" fill="#f4f4f4"/><path d="M181 123l8-13h19v13zM212 110h34v12h-34zM250 110h10v12l-10-6z" fill="#3f4650"/><path d="M190 112h14v9h-14zM214 112h16v8h-16z" fill="#bfc9c6" opacity=".700"/><path d="M208 110h4v13h-4zM246 110h4v8h-4z" fill="#f2f2f2"/><path d="M250 110h10v4l-6 3z" fill="#6a8ad0"/><path d="M218 126c2-3 5-4 9-4h33v16h-44z" fill="#f0f0f0"/><rect x="208" y="138" width="52" height="1.800" fill="#c9c0d0"/><rect x="131" y="146" width="8" height="5" rx="1" fill="#d9d9d9"/><circle cx="150" cy="151.5" r="11.500" fill="#1d1a22"/><circle cx="150" cy="151.5" r="7" fill="#c9c9d2"/><circle cx="150" cy="151.5" r="4.500" fill="#5a5a66"/><circle cx="150" cy="151.5" r="1.800" fill="#e0e0e6"/><circle cx="252" cy="157.5" r="11.500" fill="#1d1a22"/><circle cx="252" cy="157.5" r="7" fill="#c9c9d2"/><circle cx="252" cy="157.5" r="4.500" fill="#5a5a66"/><circle cx="252" cy="157.5" r="1.800" fill="#e0e0e6"/><path d="M140 163l120 6v5H170z" fill="#3a3040" opacity=".600"/></g><rect width="260" height="174" filter="url(#nz)" opacity=".070"/></g></svg>
<svg class="a" style="left:1524px;top:940px;" width="262" height="138" viewBox="0 0 262 138"><defs><filter id="f3" x="-10%" y="-10%" width="120%" height="120%"><feTurbulence type="fractalNoise" baseFrequency="0.220" numOctaves="2" seed="3"/><feDisplacementMap in="SourceGraphic" scale="7"/></filter><linearGradient id="pc" x1="0" y1="0" x2="0" y2="1"><stop offset="0" stop-color="#f9b12a"/><stop offset=".450" stop-color="#f8a61c"/><stop offset="1" stop-color="#e8900e"/></linearGradient><pattern id="grid" width="9" height="7" patternUnits="userSpaceOnUse"><rect width="9" height="7" fill="#3b424a"/><rect x="1" y="1" width="7" height="5" fill="#4d5963"/></pattern><clipPath id="c3"><rect width="262" height="138"/></clipPath></defs><g clip-path="url(#c3)"><rect width="262" height="138" fill="#8f857a"/><rect x="75" y="0" width="170" height="34" fill="url(#grid)"/><rect x="0" y="0" width="76" height="34" fill="#8fa5a6"/><path d="M0 0h22v34H0z" fill="#5f8a8c"/><path d="M30 0h10v34H30zM46 0h9v34h-9z" fill="#c6bfb1"/><path d="M56 0h20l3 10-10 2v22H56z" fill="#a9c2c2"/><path d="M58 0h24l-3 11-12-9z" fill="#cfc6b6"/><rect x="206" y="0" width="40" height="40" fill="#3f7f86"/><rect x="226" y="0" width="18" height="40" fill="#5a98a0"/><path d="M245 0h17v26h-17z" fill="#f6f6f0"/><rect x="246" y="26" width="16" height="22" fill="#55777c"/><g filter="url(#f3)"><ellipse cx="179" cy="18" rx="26" ry="15" fill="#4e7338"/><ellipse cx="172" cy="12" rx="10" ry="6" fill="#7d9a5a"/><ellipse cx="190" cy="20" rx="8" ry="5" fill="#2f5226"/><ellipse cx="250" cy="55" rx="10" ry="6" fill="#8a9a3a"/></g><rect x="0" y="25.500" width="205" height="1.300" fill="#8f8a88"/><path d="M0 32h216l46 30v50l-62-49H0z" fill="#6f666b"/><path d="M58.500 26v62M127 26v62M199 26v70" stroke="#857d80" stroke-width="1.600" fill="none"/><rect x="0" y="63" width="200" height="5" fill="#2e2a2a"/><path d="M3 63h4v4H3zM12 63h5v4h-5zM22 63h4v4h-4zM32 63h5v4h-5zM43 63h4v4h-4zM52 63h4v4h-4zM64 63h5v4h-5z" fill="#e8e4dc"/><path d="M0 68h200l62 46v8H0z" fill="#91877c"/><path d="M0 88h60v2H0zM0 103h40v1.500H0z" fill="#8c8378"/><path d="M0 72c20 6 40 5 58 0" fill="none" stroke="#4f7a86" stroke-width="1.200"/><path d="M150 68h50l30 22h-80z" fill="#9f958a"/><rect x="185" y="68" width="30" height="5" fill="#5a5a60"/><path d="M236 100h26v22h-26z" fill="#8a8a88"/><rect x="0" y="120" width="262" height="18" fill="#6a5a4c"/><rect x="0" y="127" width="262" height="11" fill="#3b302b"/><rect x="0" y="135.500" width="262" height="1" fill="#d9d0d0"/><path d="M10 108c1-6 6-11 14-14l24-11c6-2 14-2.500 22-2.500l84 2c16 1 40 2 66 6 14 2 24 7 30 14l4 7c1 3 0 6-2 8l-6 4H24c-8 0-13-3-14-8z" fill="url(#pc)"/><path d="M48 82c30-1.500 70-1 106 .800 20 1 50 3 78 8l-4 3c-30-4-60-5-90-5-34 0-66 1-96 4z" fill="#fcc24e" opacity=".800"/><path d="M12 112h240l-6 9H20z" fill="#e38a0c"/><path d="M10 110h30v2.500H10zM230 110h28v2.500h-28z" fill="#2a2622"/><path d="M13 104h10l-2 6h-9z" fill="#b81e2a"/><path d="M236 105h14l1 4h-16z" fill="#f07a10"/><path d="M50 82l33-19 3 21z" fill="#a9cbc6"/><path d="M50 82l33-19" stroke="#3a3a3a" stroke-width="1.200" fill="none"/><path d="M83 62c4-1.500 10-2 15-1l4 23H86z" fill="#9aa3ad"/><path d="M90 66h6l2 16h-6z" fill="#6f7680"/><path d="M99 64l8 0 10 18-14 2z" fill="#3a3f4d"/><path d="M104 78h14l3 5h-18z" fill="#2b2f3a"/><path d="M131 60l6-1 22 23-5 1z" fill="#e8ecee"/><path d="M136 60l3-.500 22 22-3 1z" fill="#f0a020"/><path d="M137 64l17 18h-13z" fill="#b9c6c8" opacity=".700"/><ellipse cx="143" cy="80" rx="3" ry="2" fill="#d9dde0"/><path d="M98.500 85c1 10 4 20 9 28M173 84.500c1.500 10 1.500 20 0 29" fill="none" stroke="#b9780a" stroke-width=".800"/><rect x="100" y="91" width="13" height="2" rx="1" fill="#d0d0d0"/><ellipse cx="88" cy="88" rx="4.500" ry="2.200" fill="none" stroke="#c78208" stroke-width=".700"/><path d="M41.5 121c0-14 10-24 23-24s23 10 23 24z" fill="#1e1a18"/><circle cx="64.5" cy="118.800" r="18.500" fill="#211d1c"/><circle cx="64.5" cy="118.800" r="12.800" fill="#b9b9bb"/><circle cx="64.5" cy="118.800" r="11" fill="#55555a"/><g stroke="#e4e4e6" stroke-width="3.400" stroke-linecap="round"><path d="M64.5 118.800l0-9M64.5 118.800l8.500-2.800M64.5 118.800l5.300 7.300M64.5 118.800l-5.300 7.300M64.5 118.800l-8.500-2.800"/></g><circle cx="64.5" cy="118.800" r="2.600" fill="#d8d8da"/><path d="M182 121c0-14 10-24 23-24s23 10 23 24z" fill="#1e1a18"/><circle cx="205" cy="118.800" r="18.500" fill="#211d1c"/><circle cx="205" cy="118.800" r="12.800" fill="#b9b9bb"/><circle cx="205" cy="118.800" r="11" fill="#55555a"/><g stroke="#e4e4e6" stroke-width="3.400" stroke-linecap="round"><path d="M205 118.800l0-9M205 118.800l8.500-2.800M205 118.800l5.300 7.300M205 118.800l-5.300 7.300M205 118.800l-8.500-2.800"/></g><circle cx="205" cy="118.800" r="2.600" fill="#d8d8da"/><rect width="262" height="138" filter="url(#nz)" opacity=".060"/></g></svg>
<svg class="a" style="left:1728.7px;top:945.7px;" width="30" height="30" viewBox="0 0 30 30"><circle cx="15" cy="15" r="9.2" fill="none" stroke="#ee3a24" stroke-width="2.3"/><circle cx="15" cy="15" r="4.3" fill="#ee3a24"/><path d="M15 1.0v4.5M15 29.0v-4.5M1.0 15h4.5M29.0 15h-4.5" stroke="#ee3a24" stroke-width="2.3"/></svg>
<svg class="a" style="left:1761.3px;top:944.4px;" width="20" height="32" viewBox="0 0 20 32"><path d="M10 4v20.700" stroke="#2ba150" stroke-width="2.500"/><path d="M2.600 11.800l7.400-7.400 7.400 7.400" fill="none" stroke="#2ba150" stroke-width="2.500"/><rect x="1.200" y="27.700" width="17.600" height="2.400" fill="#d2d3d3"/></svg>
<!-- menu -->
<div class="a" style="left:276px;top:410px;width:218px;height:668px;background:#1b1e22;"></div>
<svg class="a" style="left:283px;top:415.0px;" width="28" height="30" viewBox="0 0 28 30"><path d="M5 2h11l7 7v16a2 2 0 0 1-2 2H5a2 2 0 0 1-2-2V4a2 2 0 0 1 2-2z" fill="#5c9bf5"/><path d="M16 2l7 7h-5a2 2 0 0 1-2-2z" fill="#a5c7fb"/><path d="M7 14h12v1.400H7zM7 16.700h12v1.400H7zM7 19.400h12v1.400H7z" fill="#fff"/></svg>
<svg class="a" style="left:296.0px;top:430.0px;" width="15" height="15" viewBox="0 0 15 15"><circle cx="7.500" cy="7.500" r="7.500" fill="#2ba150"/><path d="M7.500 3.300v8.400M3.300 7.500h8.400" stroke="#fff" stroke-width="2.100"/></svg>
<div class="a t" style="left:320.77px;top:419.00px;font-size:16.5px;line-height:23px;color:#fff;letter-spacing:-0.062px;-webkit-text-stroke:0.320px #fff;">Add Page</div>
<svg class="a" style="left:474.75px;top:424.1px;" width="7.5" height="11.8" viewBox="0 0 7.5 11.8"><path d="M0 0l7.500 5.900L0 11.800z" fill="#8c8c8c"/></svg>
<svg class="a" style="left:283px;top:455.7px;" width="28" height="30" viewBox="0 0 28 30"><rect x="5.500" y="3.500" width="15.500" height="6" rx="1" fill="#5c9bf5"/><rect x="5.500" y="3.500" width="15.500" height="2.200" rx="1" fill="#8ab4f8"/><path d="M2.500 9h21.500a2 2 0 0 1 2 2v9.500h-25.500V11a2 2 0 0 1 2-2z" fill="#8c8c8c"/><circle cx="21.500" cy="13" r="1.100" fill="#e0e0e0"/><rect x="5.500" y="17.500" width="15.500" height="9" rx="1" fill="#5c9bf5"/><path d="M8 20.300h10v1.300H8zM8 22.900h10v1.300H8z" fill="#dbe8fd"/></svg>
<svg class="a" style="left:296.0px;top:470.7px;" width="15" height="15" viewBox="0 0 15 15"><circle cx="7.500" cy="7.500" r="7.500" fill="#2ba150"/><path d="M7.500 3.300v8.400M3.300 7.500h8.400" stroke="#fff" stroke-width="2.100"/></svg>
<div class="a t" style="left:320.77px;top:460.00px;font-size:16.5px;line-height:23px;color:#fff;letter-spacing:0.165px;-webkit-text-stroke:0.320px #fff;">Add PrintPage</div>
<svg class="a" style="left:474.75px;top:464.8px;" width="7.5" height="11.8" viewBox="0 0 7.5 11.8"><path d="M0 0l7.500 5.900L0 11.800z" fill="#8c8c8c"/></svg>
<svg class="a" style="left:283px;top:496.8px;" width="28" height="30" viewBox="0 0 28 30"><path d="M5 2h11l7 7v16a2 2 0 0 1-2 2H5a2 2 0 0 1-2-2V4a2 2 0 0 1 2-2z" fill="#5c9bf5"/><path d="M16 2l7 7h-5a2 2 0 0 1-2-2z" fill="#a5c7fb"/><path d="M10.500 15.500l-3.800 3.700 3.800 3.700M15.500 15.500l3.800 3.700-3.800 3.700" fill="none" stroke="#fff" stroke-width="1.700"/></svg>
<svg class="a" style="left:296.0px;top:511.79999999999995px;" width="15" height="15" viewBox="0 0 15 15"><circle cx="7.500" cy="7.500" r="7.500" fill="#2ba150"/><path d="M7.500 3.300v8.400M3.300 7.500h8.400" stroke="#fff" stroke-width="2.100"/></svg>
<div class="a t" style="left:320.77px;top:501.00px;font-size:16.5px;line-height:23px;color:#fff;letter-spacing:0.315px;-webkit-text-stroke:0.320px #fff;">Add Snippet</div>
<svg class="a" style="left:474.75px;top:505.90000000000003px;" width="7.5" height="11.8" viewBox="0 0 7.5 11.8"><path d="M0 0l7.500 5.900L0 11.800z" fill="#8c8c8c"/></svg>
<svg class="a" style="left:280.8px;top:537.7px" width="30" height="30" viewBox="0 0 24 24"><path fill="#2979ff" d="M3.9 12c0-1.71 1.39-3.1 3.1-3.1h4V7H7a5 5 0 0 0-5 5 5 5 0 0 0 5 5h4v-1.9H7c-1.71 0-3.1-1.39-3.1-3.1M8 13h8v-2H8zm9-6h-4v1.9h4c1.71 0 3.1 1.39 3.1 3.1s-1.39 3.1-3.1 3.1h-4V17h4a5 5 0 0 0 5-5 5 5 0 0 0-5-5" /></svg>
<svg class="a" style="left:296.0px;top:553.0px;" width="15" height="15" viewBox="0 0 15 15"><circle cx="7.500" cy="7.500" r="7.500" fill="#2ba150"/><path d="M7.500 3.300v8.400M3.300 7.500h8.400" stroke="#fff" stroke-width="2.100"/></svg>
<div class="a t" style="left:320.77px;top:542.00px;font-size:16.5px;line-height:23px;color:#fff;letter-spacing:0.274px;-webkit-text-stroke:0.320px #fff;">Add Link</div>
<svg class="a" style="left:283px;top:579.2px;" width="28" height="30" viewBox="0 0 28 30"><rect x=".500" y="5" width="25.500" height="20" rx="2.500" fill="#8ab4f8"/><path d="M1 6l12.200 11.500L25.500 6" fill="none" stroke="#2a62d8" stroke-width="1.500"/></svg>
<svg class="a" style="left:296.0px;top:594.2px;" width="15" height="15" viewBox="0 0 15 15"><circle cx="7.500" cy="7.500" r="7.500" fill="#2ba150"/><path d="M7.500 3.300v8.400M3.300 7.500h8.400" stroke="#fff" stroke-width="2.100"/></svg>
<div class="a t" style="left:320.77px;top:583.00px;font-size:16.5px;line-height:23px;color:#fff;letter-spacing:0.163px;-webkit-text-stroke:0.320px #fff;">Add Email</div>
<svg class="a" style="left:474.75px;top:588.3000000000001px;" width="7.5" height="11.8" viewBox="0 0 7.5 11.8"><path d="M0 0l7.500 5.900L0 11.800z" fill="#8c8c8c"/></svg>
<svg class="a" style="left:283px;top:620.4px;" width="28" height="30" viewBox="0 0 28 30"><rect x=".500" y="9" width="25.500" height="18.500" rx="2.500" fill="#8ab4f8"/><path d="M13.200 1.500l12.900 8.700-7 14.300-18.300-13.500z" fill="#2ba150"/><path d="M8.300 12.300c2.800-3 7-3.200 10.200.300" fill="none" stroke="#fff" stroke-width="1.800"/><path d="M6.300 8.800l.500 5.900 5.600-1z" fill="#fff"/></svg>
<svg class="a" style="left:296.0px;top:635.4px;" width="15" height="15" viewBox="0 0 15 15"><circle cx="7.500" cy="7.500" r="7.500" fill="#2ba150"/><path d="M7.500 3.300v8.400M3.300 7.500h8.400" stroke="#fff" stroke-width="2.100"/></svg>
<div class="a t" style="left:320.77px;top:624.00px;font-size:16.5px;line-height:23px;color:#fff;letter-spacing:0.358px;-webkit-text-stroke:0.320px #fff;">Add Newsletter</div>
<svg class="a" style="left:474.75px;top:629.5px;" width="7.5" height="11.8" viewBox="0 0 7.5 11.8"><path d="M0 0l7.500 5.900L0 11.800z" fill="#8c8c8c"/></svg>
<svg class="a" style="left:280.8px;top:659.7px" width="30" height="30" viewBox="0 0 24 24"><path fill="#2979ff" d="M3.9 12c0-1.71 1.39-3.1 3.1-3.1h4V7H7a5 5 0 0 0-5 5 5 5 0 0 0 5 5h4v-1.9H7c-1.71 0-3.1-1.39-3.1-3.1M8 13h8v-2H8zm9-6h-4v1.9h4c1.71 0 3.1 1.39 3.1 3.1s-1.39 3.1-3.1 3.1h-4V17h4a5 5 0 0 0 5-5 5 5 0 0 0-5-5" /></svg>
<svg class="a" style="left:290.8px;top:659.6999999999999px;" width="20" height="15.3" viewBox="0 0 16 12.250"><path fill="#ee3a24" transform="translate(-8 0)" d="M3.9 12c0-1.71 1.39-3.1 3.1-3.1h4V7H7a5 5 0 0 0-5 5 5 5 0 0 0 5 5h4v-1.9H7c-1.71 0-3.1-1.39-3.1-3.1M8 13h8v-2H8zm9-6h-4v1.9h4c1.71 0 3.1 1.39 3.1 3.1s-1.39 3.1-3.1 3.1h-4V17h4a5 5 0 0 0 5-5 5 5 0 0 0-5-5"/></svg>
<svg class="a" style="left:296.0px;top:676.9px;" width="15" height="15" viewBox="0 0 15 15"><circle cx="7.500" cy="7.500" r="7.500" fill="#2ba150"/><path d="M7.500 3.300v8.400M3.300 7.500h8.400" stroke="#fff" stroke-width="2.100"/></svg>
<div class="a t" style="left:320.77px;top:666.00px;font-size:16.5px;line-height:23px;color:#fff;letter-spacing:0.435px;-webkit-text-stroke:0.320px #fff;">Add Hardlink</div>
<svg class="a" style="left:283px;top:702.8px;" width="28" height="30" viewBox="0 0 28 30"><path d="M2 3.500h8.500l2.500 2.600h10a1.500 1.500 0 0 1 1.500 1.500V22a1.500 1.500 0 0 1-1.500 1.500H2A1.500 1.500 0 0 1 .500 22V5A1.500 1.500 0 0 1 2 3.500z" fill="#c69c6d"/><path d="M6.300 9h20.200a1.500 1.500 0 0 1 1.480 1.800l-2.300 11.400a1.600 1.600 0 0 1-1.560 1.300H3.900a1.300 1.300 0 0 1-1.280-1.560l2.200-11.700A1.500 1.500 0 0 1 6.300 9z" fill="#fcd271"/></svg>
<svg class="a" style="left:296.0px;top:717.8px;" width="15" height="15" viewBox="0 0 15 15"><circle cx="7.500" cy="7.500" r="7.500" fill="#2ba150"/><path d="M7.500 3.300v8.400M3.300 7.500h8.400" stroke="#fff" stroke-width="2.100"/></svg>
<div class="a t" style="left:320.77px;top:707.00px;font-size:16.5px;line-height:23px;color:#fff;letter-spacing:0.238px;-webkit-text-stroke:0.320px #fff;">Add Folder</div>
<svg class="a" style="left:283px;top:752.0px;" width="28" height="30" viewBox="0 0 28 30"><path d="M2.500 2h7.500l6 6v12.500a2 2 0 0 1-2 2H2.500a2 2 0 0 1-2-2V4a2 2 0 0 1 2-2z" fill="#8ab4f8"/><path d="M12.500 7h7.500l6 6v12.500a2 2 0 0 1-2 2h-11.500a2 2 0 0 1-2-2V9a2 2 0 0 1 2-2z" fill="#5c9bf5"/><path d="M20 7l6 6h-4.500a1.500 1.500 0 0 1-1.500-1.500z" fill="#a5c7fb"/></svg>
<div class="a t" style="left:320.13px;top:756.00px;font-size:16.5px;line-height:23px;color:#fff;letter-spacing:0.265px;-webkit-text-stroke:0.320px #fff;">Copy</div>
<svg class="a" style="left:283px;top:792.0px;" width="28" height="30" viewBox="0 0 28 30"><g fill="none" stroke="#ee3a24"><circle cx="5.500" cy="6.500" r="2.900" stroke-width="1.900"/><circle cx="5.500" cy="23" r="2.900" stroke-width="1.900"/></g><path d="M7.200 8.700L23.800 25.800c.900-2.200.300-4.300-1.200-6L9.800 6.300zM7.200 20.800L23.800 3.700c.900 2.200.300 4.300-1.200 6L9.800 23.200z" fill="#ee3a24"/></svg>
<div class="a t" style="left:320.13px;top:796.00px;font-size:16.5px;line-height:23px;color:#fff;letter-spacing:0.743px;-webkit-text-stroke:0.320px #fff;">Cut</div>
<svg class="a" style="left:282px;top:833.1px;" width="28" height="30" viewBox="0 0 28 30"><path d="M7 9h21v5.500h-3V18h-4v-3.500H7z" fill="#f4dc2b"/><circle cx="7.500" cy="11.500" r="7.500" fill="#f4dc2b"/><circle cx="7.500" cy="11.500" r="2.500" fill="#1b1e22"/></svg>
<svg class="a" style="left:295px;top:847.3000000000001px;" width="15" height="15" viewBox="0 0 15 15"><circle cx="7.500" cy="7.500" r="7.500" fill="#2ba150"/><path d="M2.800 6.300h5V3.300l4.600 4.200-4.600 4.200V8.700h-5z" fill="#fff"/></svg>
<div class="a t" style="left:319.62px;top:837.00px;font-size:16.5px;line-height:23px;color:#fff;letter-spacing:0.342px;-webkit-text-stroke:0.320px #fff;">Rename</div>
<svg class="a" style="left:283px;top:873.8px;" width="28" height="30" viewBox="0 0 28 30"><circle cx="13" cy="15" r="11.200" fill="none" stroke="#ee3a24" stroke-width="2.400"/><path d="M5.300 22.700L20.700 7.300" stroke="#ee3a24" stroke-width="2.400"/></svg>
<div class="a t" style="left:319.81px;top:878.00px;font-size:16.5px;line-height:23px;color:#fff;letter-spacing:0.733px;-webkit-text-stroke:0.320px #fff;">Unpublish</div>
<svg class="a" style="left:283px;top:915.0px;" width="28" height="30" viewBox="0 0 28 30"><path d="M8 3.200h8l.800 1.500H7.200z" fill="#8a8a8a"/><rect x="4" y="4.500" width="17.500" height="2.800" rx=".600" fill="#9a9a9a"/><path d="M5.500 8h14.500l-1 16a2 2 0 0 1-2 1.800h-8.500a2 2 0 0 1-2-1.800z" fill="#b4b4b4"/><path d="M9.200 9.500h1.900v14H9.200zM14.200 9.500h1.900v14h-1.900z" fill="#7d7d7d"/></svg>
<svg class="a" style="left:296.0px;top:930.0px;" width="15" height="15" viewBox="0 0 15 15"><circle cx="7.500" cy="7.500" r="7.500" fill="#ee3a24"/><path d="M4.700 4.700l5.600 5.600M10.300 4.700l-5.600 5.600" stroke="#fff" stroke-width="2.100"/></svg>
<div class="a t" style="left:319.62px;top:919.00px;font-size:16.5px;line-height:23px;color:#fff;letter-spacing:0.622px;-webkit-text-stroke:0.320px #fff;">Delete</div>
<svg class="a" style="left:283px;top:957.2px;" width="28" height="30" viewBox="0 0 28 30"><path d="M11 5.200H4.500a1.500 1.500 0 0 0-1.500 1.500v17.800a1.500 1.500 0 0 0 1.500 1.500h17.800a1.500 1.500 0 0 0 1.500-1.500V18" fill="none" stroke="#9c9c9c" stroke-width="2"/><path d="M9.500 19.500L23 6" stroke="#2ba150" stroke-width="2.300"/><path d="M15.500 4.200h9.300v9.300" fill="none" stroke="#2ba150" stroke-width="2.300"/></svg>
<div class="a t" style="left:320.26px;top:961.00px;font-size:16.5px;line-height:23px;color:#fff;letter-spacing:0.379px;-webkit-text-stroke:0.320px #fff;">Open in new Window</div>
<svg class="a" style="left:283px;top:1004.6px;" width="28" height="30" viewBox="0 0 28 30"><circle cx="5.500" cy="15" r="2.500" fill="#9a9a9a"/><circle cx="13" cy="15" r="2.500" fill="#9a9a9a"/><circle cx="20.500" cy="15" r="2.500" fill="#9a9a9a"/></svg>
<div class="a t" style="left:320.77px;top:1009.00px;font-size:16.5px;line-height:23px;color:#fff;letter-spacing:0.231px;-webkit-text-stroke:0.320px #fff;">Advanced</div>
<svg class="a" style="left:474.75px;top:1013.7px;" width="7.5" height="11.8" viewBox="0 0 7.5 11.8"><path d="M0 0l7.500 5.900L0 11.800z" fill="#8c8c8c"/></svg>
<svg class="a" style="left:281.0px;top:1045.7px" width="30" height="30" viewBox="0 0 24 24"><path fill="#2ba150" d="M12 18a6 6 0 0 1-6-6c0-1 .25-1.97.7-2.8L5.24 7.74A7.93 7.93 0 0 0 4 12a8 8 0 0 0 8 8v3l4-4-4-4m0-11V1L8 5l4 4V6a6 6 0 0 1 6 6c0 1-.25 1.97-.7 2.8l1.46 1.46A7.93 7.93 0 0 0 20 12a8 8 0 0 0-8-8" /></svg>
<div class="a t" style="left:319.62px;top:1050.00px;font-size:16.5px;line-height:23px;color:#fff;letter-spacing:0.428px;-webkit-text-stroke:0.320px #fff;">Refresh</div>
<div class="a" style="left:276px;top:449px;width:218px;height:1px;background:#2b2e32;"></div>
<div class="a" style="left:276px;top:490px;width:218px;height:1px;background:#2b2e32;"></div>
<div class="a" style="left:276px;top:531px;width:218px;height:1px;background:#2b2e32;"></div>
<div class="a" style="left:276px;top:573px;width:218px;height:1px;background:#2b2e32;"></div>
<div class="a" style="left:276px;top:614px;width:218px;height:1px;background:#2b2e32;"></div>
<div class="a" style="left:276px;top:655px;width:218px;height:1px;background:#2b2e32;"></div>
<div class="a" style="left:276px;top:696px;width:218px;height:1px;background:#2b2e32;"></div>
<div class="a" style="left:276px;top:785px;width:218px;height:1px;background:#2b2e32;"></div>
<div class="a" style="left:276px;top:826px;width:218px;height:1px;background:#2b2e32;"></div>
<div class="a" style="left:276px;top:868px;width:218px;height:1px;background:#2b2e32;"></div>
<div class="a" style="left:276px;top:909px;width:218px;height:1px;background:#2b2e32;"></div>
<div class="a" style="left:276px;top:950px;width:218px;height:1px;background:#2b2e32;"></div>
<div class="a" style="left:276px;top:1039px;width:218px;height:1px;background:#2b2e32;"></div>
<div class="a" style="left:276px;top:743px;width:218px;height:3px;background:#2a2d31;"></div>
<div class="a" style="left:276px;top:996px;width:218px;height:3px;background:#2a2d31;"></div>
</body></html>
